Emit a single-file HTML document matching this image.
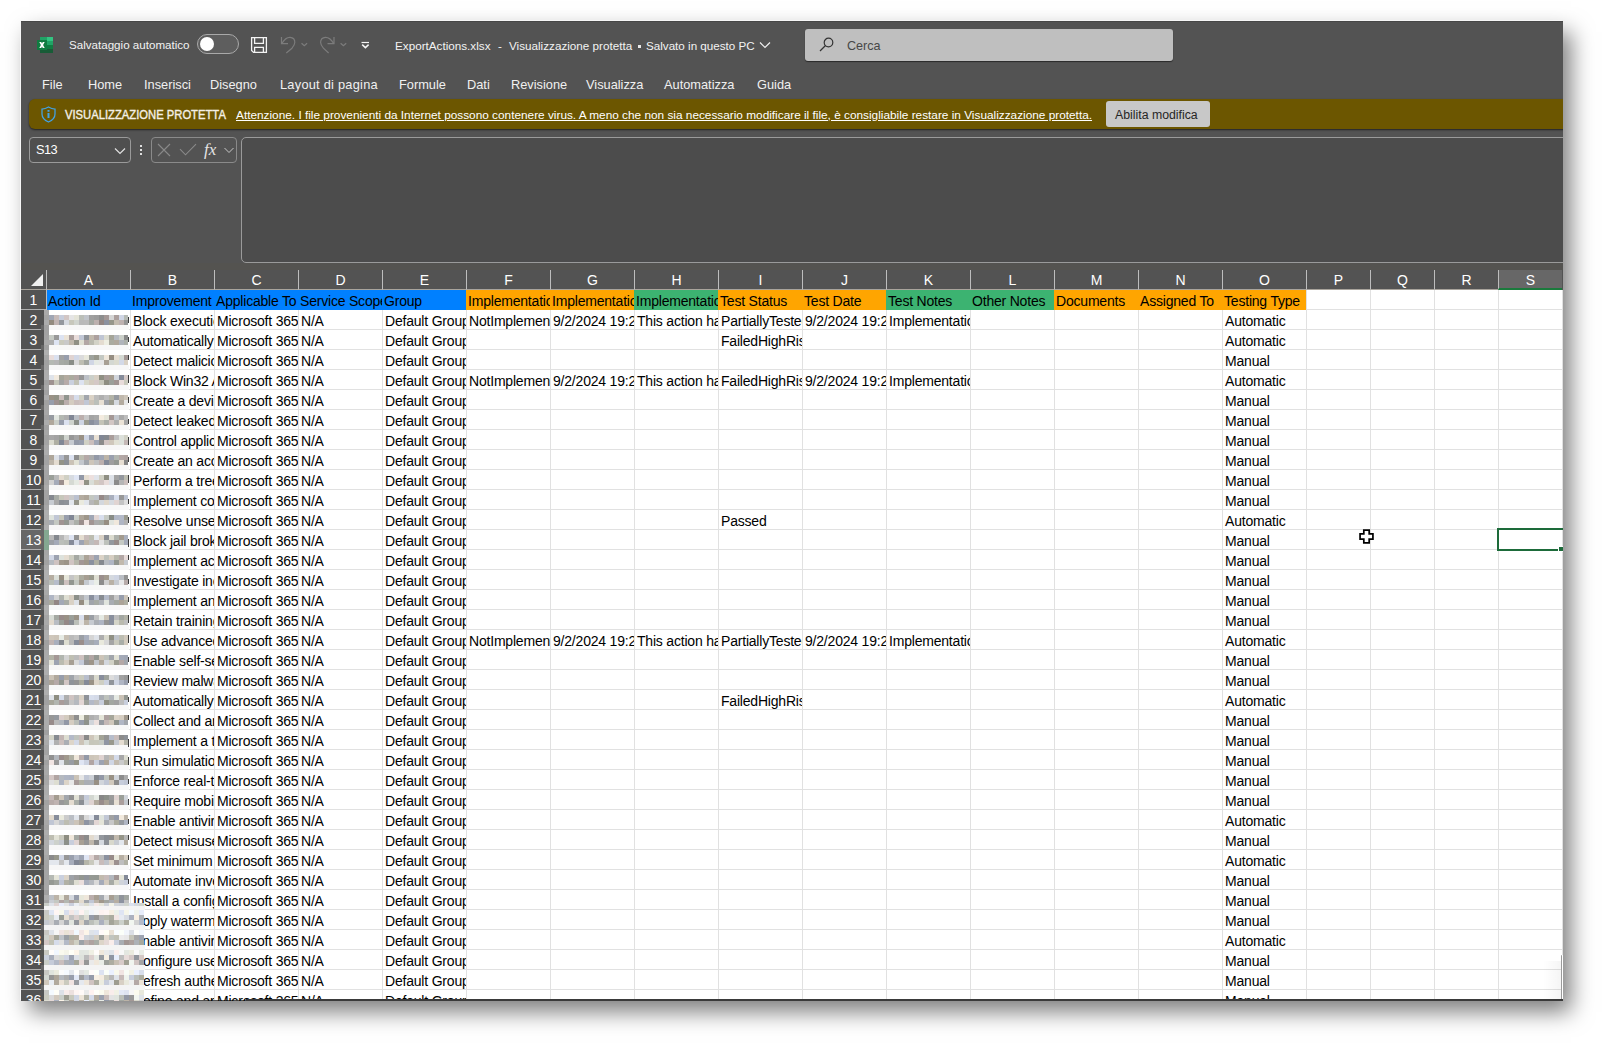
<!DOCTYPE html>
<html><head><meta charset="utf-8">
<style>
*{margin:0;padding:0;box-sizing:border-box}
html,body{width:1605px;height:1043px;background:#fff;overflow:hidden;font-family:"Liberation Sans", sans-serif}
#win{position:absolute;left:21px;top:21px;width:1542px;height:980px;background:#535353;overflow:hidden;box-shadow:-1px -1px 0 0 #f6f6f6, 8px 11px 21px rgba(0,0,0,.5)}
.abs{position:absolute}
.t{position:absolute;white-space:nowrap;color:#f2f2f2;line-height:1}
.menu span{position:absolute;top:58px;font-size:12.8px;color:#f0f0f0;white-space:nowrap;line-height:1}
#yb{position:absolute;left:8px;top:78px;width:1540px;height:30px;background:#6c5600;border-radius:6px 0 0 6px;box-shadow:0 1px 2px rgba(0,0,0,.6)}
#grid{position:absolute;left:26px;top:269px;width:1516px;height:710px;background-color:#fff;
 background-image:repeating-linear-gradient(to bottom, transparent 0, transparent 19px, #e1e1e1 19px, #e1e1e1 20px);}
.vl{position:absolute;top:269px;width:1px;height:710px;background:#e1e1e1}
.row{position:absolute;left:0;width:1542px;height:20px}
.c{position:absolute;top:0;height:19px;overflow:hidden;white-space:nowrap;font-size:14px;color:#000;line-height:23px;padding-left:2px;letter-spacing:-0.2px}
.rh{position:absolute;left:0;width:25px;height:20px;background:#535353;color:#fff;font-size:14px;text-align:center;line-height:21px;border-bottom:1px solid #b0b0b0}
.rh.sel{background:#676767}
.ch{position:absolute;top:249px;height:20px;color:#fff;font-size:14px;text-align:center;line-height:21px;border-left:1px solid #bdbdbd;border-bottom:1px solid #a9a49c;background:#535353}
.ch.sel{background:#676767;border-bottom:2px solid #1a7a3c}
#mos i{position:absolute;display:block}
</style></head><body>
<div id="win">
 <!-- title bar -->
 <svg class="abs" style="left:16px;top:16px" width="17" height="17" viewBox="0 0 17 17">
  <rect x="3" y="0" width="13" height="16" fill="#21a366"/>
  <rect x="10" y="0" width="6" height="4" fill="#33c481"/>
  <rect x="10" y="4" width="6" height="4" fill="#21a366"/>
  <rect x="3" y="8" width="13" height="4" fill="#107c41"/>
  <rect x="3" y="12" width="13" height="4" fill="#185c37"/>
  <rect x="0" y="3" width="10" height="10" fill="#107c41"/>
  <path d="M2.3 5 L4.2 5 L5 6.6 L5.8 5 L7.7 5 L6.1 8 L7.7 11 L5.8 11 L5 9.4 L4.2 11 L2.3 11 L3.9 8 Z" fill="#fff"/>
 </svg>
 <div class="t" style="left:48px;top:18px;font-size:11.6px">Salvataggio automatico</div>
 <div class="abs" style="left:176px;top:13px;width:42px;height:20px;border:1px solid #a9a9a9;border-radius:10px;background:#5e5e5e"></div>
 <div class="abs" style="left:179px;top:16px;width:14px;height:14px;border-radius:7px;background:#fff"></div>
 <svg class="abs" style="left:224px;top:11px" width="130" height="26" viewBox="245 32 130 26" fill="none" stroke-width="1.3">
  <g stroke="#f4f4f4"><path d="M251.6 37.6 H266.4 V52.4 H253.6 L251.6 50.4 Z"/><path d="M254.6 37.6 V43.4 H263.4 V37.6"/><path d="M254.6 52.4 V47.4 H263.4 V52.4"/>
  <path d="M361.5 42.5 H369" stroke-width="1.2"/><path d="M362.2 44.6 L365.4 47.6 L368.6 44.6" stroke-width="1.5"/></g>
  <g stroke="#7c7c7c" stroke-width="1.2"><path d="M281.5 37 V43.6 H288"/><path d="M282 43.2 Q 285.5 37.2 290 37.3 Q 295 37.6 294.8 42.5 Q 294.6 45.2 292 48.2 L 286.3 53"/>
  <path d="M301.5 43.2 L304.3 45.8 L307.1 43.2"/>
  <path d="M334 37 V43.6 H327.5"/><path d="M333.5 43.2 Q 330 37.2 325.5 37.3 Q 320.6 37.6 320.6 42.5 Q 320.8 45.2 323.4 48.2 L 328.6 53"/>
  <path d="M340.6 43.2 L343.4 45.8 L346.2 43.2"/></g>
 </svg>
 <div class="t" style="left:374px;top:19px;font-size:11.7px;color:#f2f2f2">ExportActions.xlsx</div>
 <div class="t" style="left:477px;top:19px;font-size:11.7px;color:#f2f2f2">-</div>
 <div class="t" style="left:488px;top:19px;font-size:11.7px;color:#f2f2f2">Visualizzazione protetta</div>
 <div class="abs" style="left:617px;top:24px;width:3px;height:3px;background:#e8e8e8"></div>
 <div class="t" style="left:625px;top:19px;font-size:11.65px;color:#f2f2f2">Salvato in questo PC</div>
 <svg class="abs" style="left:738px;top:19px" width="12" height="10" viewBox="0 0 12 10" fill="none" stroke="#f0f0f0" stroke-width="1.2"><path d="M1 2.5 L6 7.5 L11 2.5"/></svg>
 <div class="abs" style="left:784px;top:8px;width:368px;height:32px;background:#bfbfbf;border-radius:3px;box-shadow:0 1px 1px rgba(0,0,0,.5)"></div>
 <svg class="abs" style="left:797px;top:16px" width="16" height="16" viewBox="0 0 16 16" fill="none" stroke="#333" stroke-width="1.2"><circle cx="10.5" cy="5.5" r="4.3"/><path d="M7.5 8.5 L2 14"/></svg>
 <div class="t" style="left:826px;top:19px;font-size:12.6px;color:#474747">Cerca</div>
 <!-- menu -->
 <div class="menu">
  <span style="left:21px">File</span><span style="left:67px">Home</span><span style="left:123px">Inserisci</span><span style="left:189px">Disegno</span><span style="left:259px;letter-spacing:0.25px">Layout di pagina</span><span style="left:378px">Formule</span><span style="left:446px">Dati</span><span style="left:490px">Revisione</span><span style="left:565px">Visualizza</span><span style="left:643px">Automatizza</span><span style="left:736px">Guida</span>
 </div>
 <!-- yellow bar -->
 <div id="yb"></div>
 <svg class="abs" style="left:20px;top:85px" width="15" height="17" viewBox="0 0 15 17" fill="none" stroke="#42a3e6" stroke-width="1.25">
  <path d="M7.5 1 C5 2.5 3 3 1 3 V8 C1 12 4 14.5 7.5 16 C11 14.5 14 12 14 8 V3 C12 3 10 2.5 7.5 1 Z"/>
  <rect x="6.5" y="7" width="2" height="5" fill="#42a3e6" stroke="none"/><rect x="6.5" y="4" width="2" height="1.8" fill="#42a3e6" stroke="none"/>
 </svg>
 <div class="t" style="left:44px;top:88px;font-size:12.2px;-webkit-text-stroke:0.35px #f4f0e6;color:#f4f0e6;transform:scaleX(0.922);transform-origin:0 0">VISUALIZZAZIONE PROTETTA</div>
 <div class="t" style="left:215px;top:89px;font-size:11.82px;color:#fff;text-decoration:underline">Attenzione. I file provenienti da Internet possono contenere virus. A meno che non sia necessario modificare il file, è consigliabile restare in Visualizzazione protetta.</div>
 <div class="abs" style="left:1085px;top:80px;width:104px;height:26px;background:#c8c8c8;border-radius:3px"></div>
 <div class="t" style="left:1094px;top:88px;font-size:12.3px;color:#262626">Abilita modifica</div>
 <!-- formula bar -->
 <div class="abs" style="left:8px;top:116px;width:102px;height:26px;border:1px solid #9a9a9a;border-radius:4px;background:#4f4f4f"></div>
 <div class="t" style="left:15px;top:123px;font-size:12.8px;letter-spacing:-0.6px;color:#fff">S13</div>
 <svg class="abs" style="left:92px;top:125px" width="14" height="10" viewBox="0 0 14 10" fill="none" stroke="#e0e0e0" stroke-width="1.2"><path d="M2 2.5 L7 7.5 L12 2.5"/></svg>
 <div class="abs" style="left:119px;top:124px;width:2px;height:2px;background:#e0e0e0;box-shadow:0 4px 0 #e0e0e0,0 8px 0 #e0e0e0"></div>
 <div class="abs" style="left:130px;top:116px;width:86px;height:26px;border:1px solid #8a8a8a;border-radius:4px;background:#535353"></div>
 <svg class="abs" style="left:135px;top:122px" width="80" height="16" viewBox="0 0 80 16" fill="none" stroke="#8a8a8a" stroke-width="1.1">
  <path d="M2 1 L14 13 M14 1 L2 13"/><path d="M24 6.2 L29.5 11.8 L40 1.2"/>
 </svg>
 <div class="t" style="left:183px;top:120px;font-family:'Liberation Serif',serif;font-style:italic;font-size:17px;color:#e4e4e4">fx</div>
 <svg class="abs" style="left:202px;top:125px" width="12" height="9" viewBox="0 0 12 9" fill="none" stroke="#c8c8c8" stroke-width="1"><path d="M1.5 2 L6 6.5 L10.5 2"/></svg>
 <div class="abs" style="left:220px;top:116px;width:1340px;height:126px;border:1px solid #9a9a9a;border-radius:5px;background:#4c4c4c"></div>
 <div class="abs" style="left:0;top:242px;width:1542px;height:7px;background:#545350"></div>
 <!-- grid -->
 <div id="grid"></div>
 <div class="vl" style="left:109px"></div><div class="vl" style="left:193px"></div><div class="vl" style="left:277px"></div><div class="vl" style="left:361px"></div><div class="vl" style="left:445px"></div><div class="vl" style="left:529px"></div><div class="vl" style="left:613px"></div><div class="vl" style="left:697px"></div><div class="vl" style="left:781px"></div><div class="vl" style="left:865px"></div><div class="vl" style="left:949px"></div><div class="vl" style="left:1033px"></div><div class="vl" style="left:1117px"></div><div class="vl" style="left:1201px"></div><div class="vl" style="left:1285px"></div><div class="vl" style="left:1349px"></div><div class="vl" style="left:1413px"></div><div class="vl" style="left:1477px"></div><div class="vl" style="left:1541px"></div>
 <div class="row" style="top:269px"><div class="c" style="left:26px;width:83px;background:#0080ff;left:25px;width:84px;height:20px"><span>Action Id</span></div><div class="c" style="left:110px;width:83px;background:#0080ff;left:109px;width:84px;height:20px"><span>Improvement Action</span></div><div class="c" style="left:194px;width:83px;background:#0080ff;left:193px;width:84px;height:20px"><span>Applicable To</span></div><div class="c" style="left:278px;width:83px;background:#0080ff;left:277px;width:84px;height:20px"><span>Service Scope</span></div><div class="c" style="left:362px;width:83px;background:#0080ff;left:361px;width:84px;height:20px"><span>Group</span></div><div class="c" style="left:446px;width:83px;background:#ffa500;left:445px;width:84px;height:20px"><span>Implementation Status</span></div><div class="c" style="left:530px;width:83px;background:#ffa500;left:529px;width:84px;height:20px"><span>Implementation Date</span></div><div class="c" style="left:614px;width:83px;background:#3cb371;left:613px;width:84px;height:20px"><span>Implementation Notes</span></div><div class="c" style="left:698px;width:83px;background:#ffa500;left:697px;width:84px;height:20px"><span>Test Status</span></div><div class="c" style="left:782px;width:83px;background:#ffa500;left:781px;width:84px;height:20px"><span>Test Date</span></div><div class="c" style="left:866px;width:83px;background:#3cb371;left:865px;width:84px;height:20px"><span>Test Notes</span></div><div class="c" style="left:950px;width:83px;background:#3cb371;left:949px;width:84px;height:20px"><span>Other Notes</span></div><div class="c" style="left:1034px;width:83px;background:#ffa500;left:1033px;width:84px;height:20px"><span>Documents</span></div><div class="c" style="left:1118px;width:83px;background:#ffa500;left:1117px;width:84px;height:20px"><span>Assigned To</span></div><div class="c" style="left:1202px;width:83px;background:#ffa500;left:1201px;width:84px;height:20px"><span>Testing Type</span></div></div><div class="row" style="top:289px"><div class="c" style="left:110px;width:83px"><span>Block execution of potentially obfuscated scripts</span></div><div class="c" style="left:194px;width:83px"><span>Microsoft 365 E5</span></div><div class="c" style="left:278px;width:83px"><span>N/A</span></div><div class="c" style="left:362px;width:83px"><span>Default Group</span></div><div class="c" style="left:446px;width:83px"><span>NotImplemented</span></div><div class="c" style="left:530px;width:83px"><span>9/2/2024 19:28</span></div><div class="c" style="left:614px;width:83px"><span>This action has</span></div><div class="c" style="left:698px;width:83px"><span>PartiallyTested</span></div><div class="c" style="left:782px;width:83px"><span>9/2/2024 19:28</span></div><div class="c" style="left:866px;width:83px"><span>Implementation</span></div><div class="c" style="left:1202px;width:83px"><span>Automatic</span></div></div><div class="row" style="top:309px"><div class="c" style="left:110px;width:83px"><span>Automatically apply sensitivity labels</span></div><div class="c" style="left:194px;width:83px"><span>Microsoft 365 E5</span></div><div class="c" style="left:278px;width:83px"><span>N/A</span></div><div class="c" style="left:362px;width:83px"><span>Default Group</span></div><div class="c" style="left:698px;width:83px"><span>FailedHighRisk</span></div><div class="c" style="left:1202px;width:83px"><span>Automatic</span></div></div><div class="row" style="top:329px"><div class="c" style="left:110px;width:83px"><span>Detect malicious activity</span></div><div class="c" style="left:194px;width:83px"><span>Microsoft 365 E5</span></div><div class="c" style="left:278px;width:83px"><span>N/A</span></div><div class="c" style="left:362px;width:83px"><span>Default Group</span></div><div class="c" style="left:1202px;width:83px"><span>Manual</span></div></div><div class="row" style="top:349px"><div class="c" style="left:110px;width:83px"><span>Block Win32 API calls from Office macros</span></div><div class="c" style="left:194px;width:83px"><span>Microsoft 365 E5</span></div><div class="c" style="left:278px;width:83px"><span>N/A</span></div><div class="c" style="left:362px;width:83px"><span>Default Group</span></div><div class="c" style="left:446px;width:83px"><span>NotImplemented</span></div><div class="c" style="left:530px;width:83px"><span>9/2/2024 19:28</span></div><div class="c" style="left:614px;width:83px"><span>This action has</span></div><div class="c" style="left:698px;width:83px"><span>FailedHighRisk</span></div><div class="c" style="left:782px;width:83px"><span>9/2/2024 19:28</span></div><div class="c" style="left:866px;width:83px"><span>Implementation</span></div><div class="c" style="left:1202px;width:83px"><span>Automatic</span></div></div><div class="row" style="top:369px"><div class="c" style="left:110px;width:83px"><span>Create a device compliance policy</span></div><div class="c" style="left:194px;width:83px"><span>Microsoft 365 E5</span></div><div class="c" style="left:278px;width:83px"><span>N/A</span></div><div class="c" style="left:362px;width:83px"><span>Default Group</span></div><div class="c" style="left:1202px;width:83px"><span>Manual</span></div></div><div class="row" style="top:389px"><div class="c" style="left:110px;width:83px"><span>Detect leaked credentials</span></div><div class="c" style="left:194px;width:83px"><span>Microsoft 365 E5</span></div><div class="c" style="left:278px;width:83px"><span>N/A</span></div><div class="c" style="left:362px;width:83px"><span>Default Group</span></div><div class="c" style="left:1202px;width:83px"><span>Manual</span></div></div><div class="row" style="top:409px"><div class="c" style="left:110px;width:83px"><span>Control application permissions</span></div><div class="c" style="left:194px;width:83px"><span>Microsoft 365 E5</span></div><div class="c" style="left:278px;width:83px"><span>N/A</span></div><div class="c" style="left:362px;width:83px"><span>Default Group</span></div><div class="c" style="left:1202px;width:83px"><span>Manual</span></div></div><div class="row" style="top:429px"><div class="c" style="left:110px;width:83px"><span>Create an account</span></div><div class="c" style="left:194px;width:83px"><span>Microsoft 365 E5</span></div><div class="c" style="left:278px;width:83px"><span>N/A</span></div><div class="c" style="left:362px;width:83px"><span>Default Group</span></div><div class="c" style="left:1202px;width:83px"><span>Manual</span></div></div><div class="row" style="top:449px"><div class="c" style="left:110px;width:83px"><span>Perform a tree</span></div><div class="c" style="left:194px;width:83px"><span>Microsoft 365 E5</span></div><div class="c" style="left:278px;width:83px"><span>N/A</span></div><div class="c" style="left:362px;width:83px"><span>Default Group</span></div><div class="c" style="left:1202px;width:83px"><span>Manual</span></div></div><div class="row" style="top:469px"><div class="c" style="left:110px;width:83px"><span>Implement controls</span></div><div class="c" style="left:194px;width:83px"><span>Microsoft 365 E5</span></div><div class="c" style="left:278px;width:83px"><span>N/A</span></div><div class="c" style="left:362px;width:83px"><span>Default Group</span></div><div class="c" style="left:1202px;width:83px"><span>Manual</span></div></div><div class="row" style="top:489px"><div class="c" style="left:110px;width:83px"><span>Resolve unsecure</span></div><div class="c" style="left:194px;width:83px"><span>Microsoft 365 E5</span></div><div class="c" style="left:278px;width:83px"><span>N/A</span></div><div class="c" style="left:362px;width:83px"><span>Default Group</span></div><div class="c" style="left:698px;width:83px"><span>Passed</span></div><div class="c" style="left:1202px;width:83px"><span>Automatic</span></div></div><div class="row" style="top:509px"><div class="c" style="left:110px;width:83px"><span>Block jail broken devices</span></div><div class="c" style="left:194px;width:83px"><span>Microsoft 365 E5</span></div><div class="c" style="left:278px;width:83px"><span>N/A</span></div><div class="c" style="left:362px;width:83px"><span>Default Group</span></div><div class="c" style="left:1202px;width:83px"><span>Manual</span></div></div><div class="row" style="top:529px"><div class="c" style="left:110px;width:83px"><span>Implement access</span></div><div class="c" style="left:194px;width:83px"><span>Microsoft 365 E5</span></div><div class="c" style="left:278px;width:83px"><span>N/A</span></div><div class="c" style="left:362px;width:83px"><span>Default Group</span></div><div class="c" style="left:1202px;width:83px"><span>Manual</span></div></div><div class="row" style="top:549px"><div class="c" style="left:110px;width:83px"><span>Investigate incidents</span></div><div class="c" style="left:194px;width:83px"><span>Microsoft 365 E5</span></div><div class="c" style="left:278px;width:83px"><span>N/A</span></div><div class="c" style="left:362px;width:83px"><span>Default Group</span></div><div class="c" style="left:1202px;width:83px"><span>Manual</span></div></div><div class="row" style="top:569px"><div class="c" style="left:110px;width:83px"><span>Implement an</span></div><div class="c" style="left:194px;width:83px"><span>Microsoft 365 E5</span></div><div class="c" style="left:278px;width:83px"><span>N/A</span></div><div class="c" style="left:362px;width:83px"><span>Default Group</span></div><div class="c" style="left:1202px;width:83px"><span>Manual</span></div></div><div class="row" style="top:589px"><div class="c" style="left:110px;width:83px"><span>Retain training records</span></div><div class="c" style="left:194px;width:83px"><span>Microsoft 365 E5</span></div><div class="c" style="left:278px;width:83px"><span>N/A</span></div><div class="c" style="left:362px;width:83px"><span>Default Group</span></div><div class="c" style="left:1202px;width:83px"><span>Manual</span></div></div><div class="row" style="top:609px"><div class="c" style="left:110px;width:83px"><span>Use advanced threat</span></div><div class="c" style="left:194px;width:83px"><span>Microsoft 365 E5</span></div><div class="c" style="left:278px;width:83px"><span>N/A</span></div><div class="c" style="left:362px;width:83px"><span>Default Group</span></div><div class="c" style="left:446px;width:83px"><span>NotImplemented</span></div><div class="c" style="left:530px;width:83px"><span>9/2/2024 19:28</span></div><div class="c" style="left:614px;width:83px"><span>This action has</span></div><div class="c" style="left:698px;width:83px"><span>PartiallyTested</span></div><div class="c" style="left:782px;width:83px"><span>9/2/2024 19:28</span></div><div class="c" style="left:866px;width:83px"><span>Implementation</span></div><div class="c" style="left:1202px;width:83px"><span>Automatic</span></div></div><div class="row" style="top:629px"><div class="c" style="left:110px;width:83px"><span>Enable self-service</span></div><div class="c" style="left:194px;width:83px"><span>Microsoft 365 E5</span></div><div class="c" style="left:278px;width:83px"><span>N/A</span></div><div class="c" style="left:362px;width:83px"><span>Default Group</span></div><div class="c" style="left:1202px;width:83px"><span>Manual</span></div></div><div class="row" style="top:649px"><div class="c" style="left:110px;width:83px"><span>Review malware</span></div><div class="c" style="left:194px;width:83px"><span>Microsoft 365 E5</span></div><div class="c" style="left:278px;width:83px"><span>N/A</span></div><div class="c" style="left:362px;width:83px"><span>Default Group</span></div><div class="c" style="left:1202px;width:83px"><span>Manual</span></div></div><div class="row" style="top:669px"><div class="c" style="left:110px;width:83px"><span>Automatically apply</span></div><div class="c" style="left:194px;width:83px"><span>Microsoft 365 E5</span></div><div class="c" style="left:278px;width:83px"><span>N/A</span></div><div class="c" style="left:362px;width:83px"><span>Default Group</span></div><div class="c" style="left:698px;width:83px"><span>FailedHighRisk</span></div><div class="c" style="left:1202px;width:83px"><span>Automatic</span></div></div><div class="row" style="top:689px"><div class="c" style="left:110px;width:83px"><span>Collect and analyze</span></div><div class="c" style="left:194px;width:83px"><span>Microsoft 365 E5</span></div><div class="c" style="left:278px;width:83px"><span>N/A</span></div><div class="c" style="left:362px;width:83px"><span>Default Group</span></div><div class="c" style="left:1202px;width:83px"><span>Manual</span></div></div><div class="row" style="top:709px"><div class="c" style="left:110px;width:83px"><span>Implement a technical</span></div><div class="c" style="left:194px;width:83px"><span>Microsoft 365 E5</span></div><div class="c" style="left:278px;width:83px"><span>N/A</span></div><div class="c" style="left:362px;width:83px"><span>Default Group</span></div><div class="c" style="left:1202px;width:83px"><span>Manual</span></div></div><div class="row" style="top:729px"><div class="c" style="left:110px;width:83px"><span>Run simulations</span></div><div class="c" style="left:194px;width:83px"><span>Microsoft 365 E5</span></div><div class="c" style="left:278px;width:83px"><span>N/A</span></div><div class="c" style="left:362px;width:83px"><span>Default Group</span></div><div class="c" style="left:1202px;width:83px"><span>Manual</span></div></div><div class="row" style="top:749px"><div class="c" style="left:110px;width:83px"><span>Enforce real-time</span></div><div class="c" style="left:194px;width:83px"><span>Microsoft 365 E5</span></div><div class="c" style="left:278px;width:83px"><span>N/A</span></div><div class="c" style="left:362px;width:83px"><span>Default Group</span></div><div class="c" style="left:1202px;width:83px"><span>Manual</span></div></div><div class="row" style="top:769px"><div class="c" style="left:110px;width:83px"><span>Require mobile</span></div><div class="c" style="left:194px;width:83px"><span>Microsoft 365 E5</span></div><div class="c" style="left:278px;width:83px"><span>N/A</span></div><div class="c" style="left:362px;width:83px"><span>Default Group</span></div><div class="c" style="left:1202px;width:83px"><span>Manual</span></div></div><div class="row" style="top:789px"><div class="c" style="left:110px;width:83px"><span>Enable antivirus</span></div><div class="c" style="left:194px;width:83px"><span>Microsoft 365 E5</span></div><div class="c" style="left:278px;width:83px"><span>N/A</span></div><div class="c" style="left:362px;width:83px"><span>Default Group</span></div><div class="c" style="left:1202px;width:83px"><span>Automatic</span></div></div><div class="row" style="top:809px"><div class="c" style="left:110px;width:83px"><span>Detect misuse</span></div><div class="c" style="left:194px;width:83px"><span>Microsoft 365 E5</span></div><div class="c" style="left:278px;width:83px"><span>N/A</span></div><div class="c" style="left:362px;width:83px"><span>Default Group</span></div><div class="c" style="left:1202px;width:83px"><span>Manual</span></div></div><div class="row" style="top:829px"><div class="c" style="left:110px;width:83px"><span>Set minimum password</span></div><div class="c" style="left:194px;width:83px"><span>Microsoft 365 E5</span></div><div class="c" style="left:278px;width:83px"><span>N/A</span></div><div class="c" style="left:362px;width:83px"><span>Default Group</span></div><div class="c" style="left:1202px;width:83px"><span>Automatic</span></div></div><div class="row" style="top:849px"><div class="c" style="left:110px;width:83px"><span>Automate investigation</span></div><div class="c" style="left:194px;width:83px"><span>Microsoft 365 E5</span></div><div class="c" style="left:278px;width:83px"><span>N/A</span></div><div class="c" style="left:362px;width:83px"><span>Default Group</span></div><div class="c" style="left:1202px;width:83px"><span>Manual</span></div></div><div class="row" style="top:869px"><div class="c" style="left:110px;width:83px"><span>Install a configuration</span></div><div class="c" style="left:194px;width:83px"><span>Microsoft 365 E5</span></div><div class="c" style="left:278px;width:83px"><span>N/A</span></div><div class="c" style="left:362px;width:83px"><span>Default Group</span></div><div class="c" style="left:1202px;width:83px"><span>Manual</span></div></div><div class="row" style="top:889px"><div class="c" style="left:110px;width:83px"><span>Apply watermarks</span></div><div class="c" style="left:194px;width:83px"><span>Microsoft 365 E5</span></div><div class="c" style="left:278px;width:83px"><span>N/A</span></div><div class="c" style="left:362px;width:83px"><span>Default Group</span></div><div class="c" style="left:1202px;width:83px"><span>Manual</span></div></div><div class="row" style="top:909px"><div class="c" style="left:110px;width:83px"><span>Enable antivirus</span></div><div class="c" style="left:194px;width:83px"><span>Microsoft 365 E5</span></div><div class="c" style="left:278px;width:83px"><span>N/A</span></div><div class="c" style="left:362px;width:83px"><span>Default Group</span></div><div class="c" style="left:1202px;width:83px"><span>Automatic</span></div></div><div class="row" style="top:929px"><div class="c" style="left:110px;width:83px"><span>Configure user</span></div><div class="c" style="left:194px;width:83px"><span>Microsoft 365 E5</span></div><div class="c" style="left:278px;width:83px"><span>N/A</span></div><div class="c" style="left:362px;width:83px"><span>Default Group</span></div><div class="c" style="left:1202px;width:83px"><span>Manual</span></div></div><div class="row" style="top:949px"><div class="c" style="left:110px;width:83px"><span>Refresh authentication</span></div><div class="c" style="left:194px;width:83px"><span>Microsoft 365 E5</span></div><div class="c" style="left:278px;width:83px"><span>N/A</span></div><div class="c" style="left:362px;width:83px"><span>Default Group</span></div><div class="c" style="left:1202px;width:83px"><span>Manual</span></div></div><div class="row" style="top:969px"><div class="c" style="left:110px;width:83px"><span>Define and apply</span></div><div class="c" style="left:194px;width:83px"><span>Microsoft 365 E5</span></div><div class="c" style="left:278px;width:83px"><span>N/A</span></div><div class="c" style="left:362px;width:83px"><span>Default Group</span></div><div class="c" style="left:1202px;width:83px"><span>Manual</span></div></div>
 <div class="abs" style="left:0;top:249px;width:25px;height:20px;background:#535353;border-bottom:1px solid #a9a49c"></div>
 <svg class="abs" style="left:10px;top:253px" width="12" height="12" viewBox="0 0 12 12"><path d="M12 0 V12 H0 Z" fill="#f0f0f0"/></svg>
 <div class="ch" style="left:25px;width:84px">A</div><div class="ch" style="left:109px;width:84px">B</div><div class="ch" style="left:193px;width:84px">C</div><div class="ch" style="left:277px;width:84px">D</div><div class="ch" style="left:361px;width:84px">E</div><div class="ch" style="left:445px;width:84px">F</div><div class="ch" style="left:529px;width:84px">G</div><div class="ch" style="left:613px;width:84px">H</div><div class="ch" style="left:697px;width:84px">I</div><div class="ch" style="left:781px;width:84px">J</div><div class="ch" style="left:865px;width:84px">K</div><div class="ch" style="left:949px;width:84px">L</div><div class="ch" style="left:1033px;width:84px">M</div><div class="ch" style="left:1117px;width:84px">N</div><div class="ch" style="left:1201px;width:84px">O</div><div class="ch" style="left:1285px;width:64px">P</div><div class="ch" style="left:1349px;width:64px">Q</div><div class="ch" style="left:1413px;width:64px">R</div><div class="ch sel" style="left:1477px;width:64px">S</div>
 <div class="rh" style="top:269px">1</div><div class="rh" style="top:289px">2</div><div class="rh" style="top:309px">3</div><div class="rh" style="top:329px">4</div><div class="rh" style="top:349px">5</div><div class="rh" style="top:369px">6</div><div class="rh" style="top:389px">7</div><div class="rh" style="top:409px">8</div><div class="rh" style="top:429px">9</div><div class="rh" style="top:449px">10</div><div class="rh" style="top:469px">11</div><div class="rh" style="top:489px">12</div><div class="rh sel" style="top:509px">13</div><div class="rh" style="top:529px">14</div><div class="rh" style="top:549px">15</div><div class="rh" style="top:569px">16</div><div class="rh" style="top:589px">17</div><div class="rh" style="top:609px">18</div><div class="rh" style="top:629px">19</div><div class="rh" style="top:649px">20</div><div class="rh" style="top:669px">21</div><div class="rh" style="top:689px">22</div><div class="rh" style="top:709px">23</div><div class="rh" style="top:729px">24</div><div class="rh" style="top:749px">25</div><div class="rh" style="top:769px">26</div><div class="rh" style="top:789px">27</div><div class="rh" style="top:809px">28</div><div class="rh" style="top:829px">29</div><div class="rh" style="top:849px">30</div><div class="rh" style="top:869px">31</div><div class="rh" style="top:889px">32</div><div class="rh" style="top:909px">33</div><div class="rh" style="top:929px">34</div><div class="rh" style="top:949px">35</div><div class="rh" style="top:969px">36</div>
 <div class="abs" style="left:25px;top:249px;width:1px;height:730px;background:#bdbdbd"></div>
 <div id="mos"><i style="left:23px;top:289px;width:5px;height:5px;background:#aaaaaa"></i><i style="left:23px;top:294px;width:5px;height:5px;background:#a4a4a4"></i><i style="left:23px;top:299px;width:5px;height:5px;background:#acacac"></i><i style="left:23px;top:304px;width:5px;height:5px;background:#a1a1a1"></i><i style="left:23px;top:309px;width:5px;height:5px;background:#a2a2a2"></i><i style="left:23px;top:314px;width:5px;height:5px;background:#a3a3a3"></i><i style="left:23px;top:319px;width:5px;height:5px;background:#ababab"></i><i style="left:23px;top:324px;width:5px;height:5px;background:#a1a1a1"></i><i style="left:23px;top:329px;width:5px;height:5px;background:#b0b0b0"></i><i style="left:23px;top:334px;width:5px;height:5px;background:#a6a6a6"></i><i style="left:23px;top:339px;width:5px;height:5px;background:#a1a1a1"></i><i style="left:23px;top:344px;width:5px;height:5px;background:#a2a2a2"></i><i style="left:23px;top:349px;width:5px;height:5px;background:#adadad"></i><i style="left:23px;top:354px;width:5px;height:5px;background:#adadad"></i><i style="left:23px;top:359px;width:5px;height:5px;background:#a2a2a2"></i><i style="left:23px;top:364px;width:5px;height:5px;background:#a7a7a7"></i><i style="left:23px;top:369px;width:5px;height:5px;background:#a2a2a2"></i><i style="left:23px;top:374px;width:5px;height:5px;background:#adadad"></i><i style="left:23px;top:379px;width:5px;height:5px;background:#a1a1a1"></i><i style="left:23px;top:384px;width:5px;height:5px;background:#a3a3a3"></i><i style="left:23px;top:389px;width:5px;height:5px;background:#a7a7a7"></i><i style="left:23px;top:394px;width:5px;height:5px;background:#a1a1a1"></i><i style="left:23px;top:399px;width:5px;height:5px;background:#acacac"></i><i style="left:23px;top:404px;width:5px;height:5px;background:#a1a1a1"></i><i style="left:23px;top:409px;width:5px;height:5px;background:#a7a7a7"></i><i style="left:23px;top:414px;width:5px;height:5px;background:#a1a1a1"></i><i style="left:23px;top:419px;width:5px;height:5px;background:#a4a4a4"></i><i style="left:23px;top:424px;width:5px;height:5px;background:#a9a9a9"></i><i style="left:23px;top:429px;width:5px;height:5px;background:#adadad"></i><i style="left:23px;top:434px;width:5px;height:5px;background:#a4a4a4"></i><i style="left:23px;top:439px;width:5px;height:5px;background:#a3a3a3"></i><i style="left:23px;top:444px;width:5px;height:5px;background:#a9a9a9"></i><i style="left:23px;top:449px;width:5px;height:5px;background:#a5a5a5"></i><i style="left:23px;top:454px;width:5px;height:5px;background:#a3a3a3"></i><i style="left:23px;top:459px;width:5px;height:5px;background:#a6a6a6"></i><i style="left:23px;top:464px;width:5px;height:5px;background:#ababab"></i><i style="left:23px;top:469px;width:5px;height:5px;background:#a3a3a3"></i><i style="left:23px;top:474px;width:5px;height:5px;background:#a2a2a2"></i><i style="left:23px;top:479px;width:5px;height:5px;background:#a1a1a1"></i><i style="left:23px;top:484px;width:5px;height:5px;background:#a6a6a6"></i><i style="left:23px;top:489px;width:5px;height:5px;background:#afafaf"></i><i style="left:23px;top:494px;width:5px;height:5px;background:#adadad"></i><i style="left:23px;top:499px;width:5px;height:5px;background:#aaaaaa"></i><i style="left:23px;top:504px;width:5px;height:5px;background:#aeaeae"></i><i style="left:23px;top:509px;width:5px;height:5px;background:#84a891"></i><i style="left:23px;top:514px;width:5px;height:5px;background:#84a891"></i><i style="left:23px;top:519px;width:5px;height:5px;background:#84a891"></i><i style="left:23px;top:524px;width:5px;height:5px;background:#84a891"></i><i style="left:23px;top:529px;width:5px;height:5px;background:#a5a5a5"></i><i style="left:23px;top:534px;width:5px;height:5px;background:#a7a7a7"></i><i style="left:23px;top:539px;width:5px;height:5px;background:#a2a2a2"></i><i style="left:23px;top:544px;width:5px;height:5px;background:#a9a9a9"></i><i style="left:23px;top:549px;width:5px;height:5px;background:#b0b0b0"></i><i style="left:23px;top:554px;width:5px;height:5px;background:#afafaf"></i><i style="left:23px;top:559px;width:5px;height:5px;background:#aaaaaa"></i><i style="left:23px;top:564px;width:5px;height:5px;background:#aeaeae"></i><i style="left:23px;top:569px;width:5px;height:5px;background:#a9a9a9"></i><i style="left:23px;top:574px;width:5px;height:5px;background:#a2a2a2"></i><i style="left:23px;top:579px;width:5px;height:5px;background:#a3a3a3"></i><i style="left:23px;top:584px;width:5px;height:5px;background:#b0b0b0"></i><i style="left:23px;top:589px;width:5px;height:5px;background:#adadad"></i><i style="left:23px;top:594px;width:5px;height:5px;background:#a5a5a5"></i><i style="left:23px;top:599px;width:5px;height:5px;background:#aaaaaa"></i><i style="left:23px;top:604px;width:5px;height:5px;background:#a4a4a4"></i><i style="left:23px;top:609px;width:5px;height:5px;background:#afafaf"></i><i style="left:23px;top:614px;width:5px;height:5px;background:#adadad"></i><i style="left:23px;top:619px;width:5px;height:5px;background:#a1a1a1"></i><i style="left:23px;top:624px;width:5px;height:5px;background:#a2a2a2"></i><i style="left:23px;top:629px;width:5px;height:5px;background:#aaaaaa"></i><i style="left:23px;top:634px;width:5px;height:5px;background:#aaaaaa"></i><i style="left:23px;top:639px;width:5px;height:5px;background:#ababab"></i><i style="left:23px;top:644px;width:5px;height:5px;background:#afafaf"></i><i style="left:23px;top:649px;width:5px;height:5px;background:#aeaeae"></i><i style="left:23px;top:654px;width:5px;height:5px;background:#a2a2a2"></i><i style="left:23px;top:659px;width:5px;height:5px;background:#a2a2a2"></i><i style="left:23px;top:664px;width:5px;height:5px;background:#a8a8a8"></i><i style="left:23px;top:669px;width:5px;height:5px;background:#afafaf"></i><i style="left:23px;top:674px;width:5px;height:5px;background:#a2a2a2"></i><i style="left:23px;top:679px;width:5px;height:5px;background:#a1a1a1"></i><i style="left:23px;top:684px;width:5px;height:5px;background:#a9a9a9"></i><i style="left:23px;top:689px;width:5px;height:5px;background:#aeaeae"></i><i style="left:23px;top:694px;width:5px;height:5px;background:#a9a9a9"></i><i style="left:23px;top:699px;width:5px;height:5px;background:#acacac"></i><i style="left:23px;top:704px;width:5px;height:5px;background:#ababab"></i><i style="left:23px;top:709px;width:5px;height:5px;background:#a0a0a0"></i><i style="left:23px;top:714px;width:5px;height:5px;background:#aeaeae"></i><i style="left:23px;top:719px;width:5px;height:5px;background:#ababab"></i><i style="left:23px;top:724px;width:5px;height:5px;background:#a5a5a5"></i><i style="left:23px;top:729px;width:5px;height:5px;background:#a3a3a3"></i><i style="left:23px;top:734px;width:5px;height:5px;background:#afafaf"></i><i style="left:23px;top:739px;width:5px;height:5px;background:#a1a1a1"></i><i style="left:23px;top:744px;width:5px;height:5px;background:#a6a6a6"></i><i style="left:23px;top:749px;width:5px;height:5px;background:#a9a9a9"></i><i style="left:23px;top:754px;width:5px;height:5px;background:#a4a4a4"></i><i style="left:23px;top:759px;width:5px;height:5px;background:#a7a7a7"></i><i style="left:23px;top:764px;width:5px;height:5px;background:#acacac"></i><i style="left:23px;top:769px;width:5px;height:5px;background:#acacac"></i><i style="left:23px;top:774px;width:5px;height:5px;background:#afafaf"></i><i style="left:23px;top:779px;width:5px;height:5px;background:#a2a2a2"></i><i style="left:23px;top:784px;width:5px;height:5px;background:#a5a5a5"></i><i style="left:23px;top:789px;width:5px;height:5px;background:#aeaeae"></i><i style="left:23px;top:794px;width:5px;height:5px;background:#acacac"></i><i style="left:23px;top:799px;width:5px;height:5px;background:#a8a8a8"></i><i style="left:23px;top:804px;width:5px;height:5px;background:#a4a4a4"></i><i style="left:23px;top:809px;width:5px;height:5px;background:#adadad"></i><i style="left:23px;top:814px;width:5px;height:5px;background:#a8a8a8"></i><i style="left:23px;top:819px;width:5px;height:5px;background:#adadad"></i><i style="left:23px;top:824px;width:5px;height:5px;background:#ababab"></i><i style="left:23px;top:829px;width:5px;height:5px;background:#acacac"></i><i style="left:23px;top:834px;width:5px;height:5px;background:#a7a7a7"></i><i style="left:23px;top:839px;width:5px;height:5px;background:#a4a4a4"></i><i style="left:23px;top:844px;width:5px;height:5px;background:#a2a2a2"></i><i style="left:23px;top:849px;width:5px;height:5px;background:#a5a5a5"></i><i style="left:23px;top:854px;width:5px;height:5px;background:#a4a4a4"></i><i style="left:23px;top:859px;width:5px;height:5px;background:#a7a7a7"></i><i style="left:23px;top:864px;width:5px;height:5px;background:#a7a7a7"></i><i style="left:23px;top:869px;width:5px;height:5px;background:#a0a0a0"></i><i style="left:23px;top:874px;width:5px;height:5px;background:#afafaf"></i><i style="left:23px;top:879px;width:5px;height:5px;background:#a5a5a5"></i><i style="left:28px;top:294px;width:5px;height:5px;background:#a0a6b4"></i><i style="left:28px;top:299px;width:5px;height:5px;background:#938b7f"></i><i style="left:33px;top:294px;width:5px;height:5px;background:#c6bab8"></i><i style="left:33px;top:299px;width:5px;height:5px;background:#c0b4b2"></i><i style="left:38px;top:294px;width:5px;height:5px;background:#c7cddb"></i><i style="left:38px;top:299px;width:5px;height:5px;background:#93979d"></i><i style="left:43px;top:294px;width:5px;height:5px;background:#d2c6c4"></i><i style="left:43px;top:299px;width:5px;height:5px;background:#d6dae0"></i><i style="left:48px;top:294px;width:5px;height:5px;background:#e5e5e5"></i><i style="left:48px;top:299px;width:5px;height:5px;background:#c7c7bb"></i><i style="left:53px;top:294px;width:5px;height:5px;background:#e4e4d8"></i><i style="left:53px;top:299px;width:5px;height:5px;background:#d0d4ce"></i><i style="left:58px;top:294px;width:5px;height:5px;background:#bbbfb9"></i><i style="left:58px;top:299px;width:5px;height:5px;background:#b9b9b9"></i><i style="left:63px;top:294px;width:5px;height:5px;background:#c0c4ca"></i><i style="left:63px;top:299px;width:5px;height:5px;background:#bababa"></i><i style="left:68px;top:294px;width:5px;height:5px;background:#9f9f9f"></i><i style="left:68px;top:299px;width:5px;height:5px;background:#a3a7a1"></i><i style="left:73px;top:294px;width:5px;height:5px;background:#9b9b9b"></i><i style="left:73px;top:299px;width:5px;height:5px;background:#bcb0ae"></i><i style="left:78px;top:294px;width:5px;height:5px;background:#8d8d8d"></i><i style="left:78px;top:299px;width:5px;height:5px;background:#918583"></i><i style="left:83px;top:294px;width:5px;height:5px;background:#a49896"></i><i style="left:83px;top:299px;width:5px;height:5px;background:#8b919f"></i><i style="left:88px;top:294px;width:5px;height:5px;background:#d5d5d5"></i><i style="left:88px;top:299px;width:5px;height:5px;background:#96968a"></i><i style="left:93px;top:294px;width:5px;height:5px;background:#ab9f9d"></i><i style="left:93px;top:299px;width:5px;height:5px;background:#c3bbaf"></i><i style="left:98px;top:294px;width:5px;height:5px;background:#d0d6e4"></i><i style="left:98px;top:299px;width:5px;height:5px;background:#bdb1af"></i><i style="left:103px;top:294px;width:5px;height:5px;background:#b7bbb5"></i><i style="left:103px;top:299px;width:5px;height:5px;background:#969696"></i><i style="left:28px;top:304px;width:80px;height:5px;background:#f7f7f7"></i><i style="left:107px;top:294px;width:2px;height:10px;background:#ffffff"></i><i style="left:107px;top:296px;width:1px;height:6px;background:#3a3a3a"></i><i style="left:20px;top:304px;width:3px;height:5px;background:#666666"></i><i style="left:28px;top:314px;width:5px;height:5px;background:#c6cac4"></i><i style="left:28px;top:319px;width:5px;height:5px;background:#aeaeae"></i><i style="left:33px;top:314px;width:5px;height:5px;background:#999999"></i><i style="left:33px;top:319px;width:5px;height:5px;background:#dee4f2"></i><i style="left:38px;top:314px;width:5px;height:5px;background:#dde3f1"></i><i style="left:38px;top:319px;width:5px;height:5px;background:#cacabe"></i><i style="left:43px;top:314px;width:5px;height:5px;background:#ebe3d7"></i><i style="left:43px;top:319px;width:5px;height:5px;background:#c9c9c9"></i><i style="left:48px;top:314px;width:5px;height:5px;background:#ab9f9d"></i><i style="left:48px;top:319px;width:5px;height:5px;background:#c1b9ad"></i><i style="left:53px;top:314px;width:5px;height:5px;background:#e9dddb"></i><i style="left:53px;top:319px;width:5px;height:5px;background:#909084"></i><i style="left:58px;top:314px;width:5px;height:5px;background:#c2c8d6"></i><i style="left:58px;top:319px;width:5px;height:5px;background:#dfdfd3"></i><i style="left:63px;top:314px;width:5px;height:5px;background:#8e9298"></i><i style="left:63px;top:319px;width:5px;height:5px;background:#b2a6a4"></i><i style="left:68px;top:314px;width:5px;height:5px;background:#c1b9ad"></i><i style="left:68px;top:319px;width:5px;height:5px;background:#babaae"></i><i style="left:73px;top:314px;width:5px;height:5px;background:#ada19f"></i><i style="left:73px;top:319px;width:5px;height:5px;background:#d2d2c6"></i><i style="left:78px;top:314px;width:5px;height:5px;background:#bfc5d3"></i><i style="left:78px;top:319px;width:5px;height:5px;background:#e4dcd0"></i><i style="left:83px;top:314px;width:5px;height:5px;background:#dbdbcf"></i><i style="left:83px;top:319px;width:5px;height:5px;background:#eeeee2"></i><i style="left:88px;top:314px;width:5px;height:5px;background:#a5a599"></i><i style="left:88px;top:319px;width:5px;height:5px;background:#abab9f"></i><i style="left:93px;top:314px;width:5px;height:5px;background:#b6bac0"></i><i style="left:93px;top:319px;width:5px;height:5px;background:#b0a89c"></i><i style="left:98px;top:314px;width:5px;height:5px;background:#cbcfc9"></i><i style="left:98px;top:319px;width:5px;height:5px;background:#b0b4ba"></i><i style="left:103px;top:314px;width:5px;height:5px;background:#8a8a8a"></i><i style="left:103px;top:319px;width:5px;height:5px;background:#acb0aa"></i><i style="left:28px;top:324px;width:80px;height:5px;background:#f7f7f7"></i><i style="left:107px;top:314px;width:2px;height:10px;background:#ffffff"></i><i style="left:107px;top:316px;width:1px;height:5px;background:#3a3a3a"></i><i style="left:20px;top:324px;width:3px;height:5px;background:#666666"></i><i style="left:28px;top:334px;width:5px;height:5px;background:#e9dddb"></i><i style="left:28px;top:339px;width:5px;height:5px;background:#b5b9b3"></i><i style="left:33px;top:334px;width:5px;height:5px;background:#dbe1ef"></i><i style="left:33px;top:339px;width:5px;height:5px;background:#b5b5b5"></i><i style="left:38px;top:334px;width:5px;height:5px;background:#a3a3a3"></i><i style="left:38px;top:339px;width:5px;height:5px;background:#a6aaa4"></i><i style="left:43px;top:334px;width:5px;height:5px;background:#989eac"></i><i style="left:43px;top:339px;width:5px;height:5px;background:#a3a7a1"></i><i style="left:48px;top:334px;width:5px;height:5px;background:#e0d4d2"></i><i style="left:48px;top:339px;width:5px;height:5px;background:#898d87"></i><i style="left:53px;top:334px;width:5px;height:5px;background:#d2d8e6"></i><i style="left:53px;top:339px;width:5px;height:5px;background:#d9d9d9"></i><i style="left:58px;top:334px;width:5px;height:5px;background:#dbdbdb"></i><i style="left:58px;top:339px;width:5px;height:5px;background:#bebeb2"></i><i style="left:63px;top:334px;width:5px;height:5px;background:#e8e8dc"></i><i style="left:63px;top:339px;width:5px;height:5px;background:#a2a6a0"></i><i style="left:68px;top:334px;width:5px;height:5px;background:#9fa39d"></i><i style="left:68px;top:339px;width:5px;height:5px;background:#d0d6e4"></i><i style="left:73px;top:334px;width:5px;height:5px;background:#98988c"></i><i style="left:73px;top:339px;width:5px;height:5px;background:#e5e9e3"></i><i style="left:78px;top:334px;width:5px;height:5px;background:#c4c8c2"></i><i style="left:78px;top:339px;width:5px;height:5px;background:#e6e6e6"></i><i style="left:83px;top:334px;width:5px;height:5px;background:#efe7db"></i><i style="left:83px;top:339px;width:5px;height:5px;background:#a8a094"></i><i style="left:88px;top:334px;width:5px;height:5px;background:#968e82"></i><i style="left:88px;top:339px;width:5px;height:5px;background:#d4d8d2"></i><i style="left:93px;top:334px;width:5px;height:5px;background:#e6ded2"></i><i style="left:93px;top:339px;width:5px;height:5px;background:#dbdbcf"></i><i style="left:98px;top:334px;width:5px;height:5px;background:#d5d9d3"></i><i style="left:98px;top:339px;width:5px;height:5px;background:#d3d9e7"></i><i style="left:103px;top:334px;width:5px;height:5px;background:#a49896"></i><i style="left:103px;top:339px;width:5px;height:5px;background:#d9d1c5"></i><i style="left:28px;top:344px;width:80px;height:5px;background:#f7f7f7"></i><i style="left:107px;top:334px;width:2px;height:10px;background:#ffffff"></i><i style="left:107px;top:334px;width:1px;height:5px;background:#3a3a3a"></i><i style="left:20px;top:344px;width:3px;height:5px;background:#666666"></i><i style="left:28px;top:354px;width:5px;height:5px;background:#dfe3e9"></i><i style="left:28px;top:359px;width:5px;height:5px;background:#9e9290"></i><i style="left:33px;top:354px;width:5px;height:5px;background:#f2eade"></i><i style="left:33px;top:359px;width:5px;height:5px;background:#c4c4b8"></i><i style="left:38px;top:354px;width:5px;height:5px;background:#a5a599"></i><i style="left:38px;top:359px;width:5px;height:5px;background:#a2a2a2"></i><i style="left:43px;top:354px;width:5px;height:5px;background:#b3ab9f"></i><i style="left:43px;top:359px;width:5px;height:5px;background:#b6aaa8"></i><i style="left:48px;top:354px;width:5px;height:5px;background:#abab9f"></i><i style="left:48px;top:359px;width:5px;height:5px;background:#cad0de"></i><i style="left:53px;top:354px;width:5px;height:5px;background:#b2a6a4"></i><i style="left:53px;top:359px;width:5px;height:5px;background:#c2c2b6"></i><i style="left:58px;top:354px;width:5px;height:5px;background:#979797"></i><i style="left:58px;top:359px;width:5px;height:5px;background:#dde3f1"></i><i style="left:63px;top:354px;width:5px;height:5px;background:#bdc1c7"></i><i style="left:63px;top:359px;width:5px;height:5px;background:#d7d7cb"></i><i style="left:68px;top:354px;width:5px;height:5px;background:#cbcfc9"></i><i style="left:68px;top:359px;width:5px;height:5px;background:#d3cbbf"></i><i style="left:73px;top:354px;width:5px;height:5px;background:#d7cfc3"></i><i style="left:73px;top:359px;width:5px;height:5px;background:#d4c8c6"></i><i style="left:78px;top:354px;width:5px;height:5px;background:#8f8f83"></i><i style="left:78px;top:359px;width:5px;height:5px;background:#c5c5b9"></i><i style="left:83px;top:354px;width:5px;height:5px;background:#a89c9a"></i><i style="left:83px;top:359px;width:5px;height:5px;background:#8d8d81"></i><i style="left:88px;top:354px;width:5px;height:5px;background:#a69e92"></i><i style="left:88px;top:359px;width:5px;height:5px;background:#9b9f99"></i><i style="left:93px;top:354px;width:5px;height:5px;background:#d2d6dc"></i><i style="left:93px;top:359px;width:5px;height:5px;background:#a09492"></i><i style="left:98px;top:354px;width:5px;height:5px;background:#868c9a"></i><i style="left:98px;top:359px;width:5px;height:5px;background:#e8dcda"></i><i style="left:103px;top:354px;width:5px;height:5px;background:#d4c8c6"></i><i style="left:103px;top:359px;width:5px;height:5px;background:#cacabe"></i><i style="left:28px;top:364px;width:80px;height:5px;background:#f7f7f7"></i><i style="left:107px;top:354px;width:2px;height:10px;background:#ffffff"></i><i style="left:107px;top:354px;width:1px;height:8px;background:#3a3a3a"></i><i style="left:20px;top:364px;width:3px;height:5px;background:#666666"></i><i style="left:28px;top:374px;width:5px;height:5px;background:#9a9286"></i><i style="left:28px;top:379px;width:5px;height:5px;background:#979dab"></i><i style="left:33px;top:374px;width:5px;height:5px;background:#929286"></i><i style="left:33px;top:379px;width:5px;height:5px;background:#9d918f"></i><i style="left:38px;top:374px;width:5px;height:5px;background:#cabebc"></i><i style="left:38px;top:379px;width:5px;height:5px;background:#909084"></i><i style="left:43px;top:374px;width:5px;height:5px;background:#91958f"></i><i style="left:43px;top:379px;width:5px;height:5px;background:#baaeac"></i><i style="left:48px;top:374px;width:5px;height:5px;background:#d1c5c3"></i><i style="left:48px;top:379px;width:5px;height:5px;background:#d4ccc0"></i><i style="left:53px;top:374px;width:5px;height:5px;background:#d7ddeb"></i><i style="left:53px;top:379px;width:5px;height:5px;background:#cabebc"></i><i style="left:58px;top:374px;width:5px;height:5px;background:#d1d1c5"></i><i style="left:58px;top:379px;width:5px;height:5px;background:#cec2c0"></i><i style="left:63px;top:374px;width:5px;height:5px;background:#a2a6ac"></i><i style="left:63px;top:379px;width:5px;height:5px;background:#c1c7d5"></i><i style="left:68px;top:374px;width:5px;height:5px;background:#dad2c6"></i><i style="left:68px;top:379px;width:5px;height:5px;background:#ccc4b8"></i><i style="left:73px;top:374px;width:5px;height:5px;background:#bcbcbc"></i><i style="left:73px;top:379px;width:5px;height:5px;background:#bbbfb9"></i><i style="left:78px;top:374px;width:5px;height:5px;background:#afafaf"></i><i style="left:78px;top:379px;width:5px;height:5px;background:#e8e0d4"></i><i style="left:83px;top:374px;width:5px;height:5px;background:#bdbdbd"></i><i style="left:83px;top:379px;width:5px;height:5px;background:#9ea2a8"></i><i style="left:88px;top:374px;width:5px;height:5px;background:#b3b3a7"></i><i style="left:88px;top:379px;width:5px;height:5px;background:#9c9c90"></i><i style="left:93px;top:374px;width:5px;height:5px;background:#969aa0"></i><i style="left:93px;top:379px;width:5px;height:5px;background:#d5d9df"></i><i style="left:98px;top:374px;width:5px;height:5px;background:#c1b9ad"></i><i style="left:98px;top:379px;width:5px;height:5px;background:#b3ab9f"></i><i style="left:103px;top:374px;width:5px;height:5px;background:#cec6ba"></i><i style="left:103px;top:379px;width:5px;height:5px;background:#e6e6e6"></i><i style="left:28px;top:384px;width:80px;height:5px;background:#f7f7f7"></i><i style="left:107px;top:374px;width:2px;height:10px;background:#ffffff"></i><i style="left:107px;top:376px;width:1px;height:6px;background:#3a3a3a"></i><i style="left:20px;top:384px;width:3px;height:5px;background:#666666"></i><i style="left:28px;top:394px;width:5px;height:5px;background:#979ba1"></i><i style="left:28px;top:399px;width:5px;height:5px;background:#afa79b"></i><i style="left:33px;top:394px;width:5px;height:5px;background:#e3e7e1"></i><i style="left:33px;top:399px;width:5px;height:5px;background:#cacec8"></i><i style="left:38px;top:394px;width:5px;height:5px;background:#b4b8b2"></i><i style="left:38px;top:399px;width:5px;height:5px;background:#989eac"></i><i style="left:43px;top:394px;width:5px;height:5px;background:#afafaf"></i><i style="left:43px;top:399px;width:5px;height:5px;background:#dbe1ef"></i><i style="left:48px;top:394px;width:5px;height:5px;background:#818795"></i><i style="left:48px;top:399px;width:5px;height:5px;background:#cfd3cd"></i><i style="left:53px;top:394px;width:5px;height:5px;background:#bbbfc5"></i><i style="left:53px;top:399px;width:5px;height:5px;background:#8b8f89"></i><i style="left:58px;top:394px;width:5px;height:5px;background:#bbafad"></i><i style="left:58px;top:399px;width:5px;height:5px;background:#ced4e2"></i><i style="left:63px;top:394px;width:5px;height:5px;background:#c8c8c8"></i><i style="left:63px;top:399px;width:5px;height:5px;background:#9b9b8f"></i><i style="left:68px;top:394px;width:5px;height:5px;background:#a4a4a4"></i><i style="left:68px;top:399px;width:5px;height:5px;background:#898f9d"></i><i style="left:73px;top:394px;width:5px;height:5px;background:#a9a9a9"></i><i style="left:73px;top:399px;width:5px;height:5px;background:#969caa"></i><i style="left:78px;top:394px;width:5px;height:5px;background:#f3ebdf"></i><i style="left:78px;top:399px;width:5px;height:5px;background:#c3c3b7"></i><i style="left:83px;top:394px;width:5px;height:5px;background:#e3e3d7"></i><i style="left:83px;top:399px;width:5px;height:5px;background:#aaaea8"></i><i style="left:88px;top:394px;width:5px;height:5px;background:#a49896"></i><i style="left:88px;top:399px;width:5px;height:5px;background:#d2c6c4"></i><i style="left:93px;top:394px;width:5px;height:5px;background:#c2c6cc"></i><i style="left:93px;top:399px;width:5px;height:5px;background:#b0b0b0"></i><i style="left:98px;top:394px;width:5px;height:5px;background:#aaaaaa"></i><i style="left:98px;top:399px;width:5px;height:5px;background:#ebe3d7"></i><i style="left:103px;top:394px;width:5px;height:5px;background:#bdbdbd"></i><i style="left:103px;top:399px;width:5px;height:5px;background:#a9a9a9"></i><i style="left:28px;top:404px;width:80px;height:5px;background:#f7f7f7"></i><i style="left:107px;top:394px;width:2px;height:10px;background:#ffffff"></i><i style="left:107px;top:398px;width:1px;height:5px;background:#3a3a3a"></i><i style="left:20px;top:404px;width:3px;height:5px;background:#666666"></i><i style="left:28px;top:414px;width:5px;height:5px;background:#a8a8a8"></i><i style="left:28px;top:419px;width:5px;height:5px;background:#dadace"></i><i style="left:33px;top:414px;width:5px;height:5px;background:#a3a3a3"></i><i style="left:33px;top:419px;width:5px;height:5px;background:#aeaea2"></i><i style="left:38px;top:414px;width:5px;height:5px;background:#989c96"></i><i style="left:38px;top:419px;width:5px;height:5px;background:#808694"></i><i style="left:43px;top:414px;width:5px;height:5px;background:#cfd3cd"></i><i style="left:43px;top:419px;width:5px;height:5px;background:#b3a7a5"></i><i style="left:48px;top:414px;width:5px;height:5px;background:#979797"></i><i style="left:48px;top:419px;width:5px;height:5px;background:#c6cad0"></i><i style="left:53px;top:414px;width:5px;height:5px;background:#a5a5a5"></i><i style="left:53px;top:419px;width:5px;height:5px;background:#9399a7"></i><i style="left:58px;top:414px;width:5px;height:5px;background:#999185"></i><i style="left:58px;top:419px;width:5px;height:5px;background:#989eac"></i><i style="left:63px;top:414px;width:5px;height:5px;background:#cfd5e3"></i><i style="left:63px;top:419px;width:5px;height:5px;background:#d0d0c4"></i><i style="left:68px;top:414px;width:5px;height:5px;background:#999fad"></i><i style="left:68px;top:419px;width:5px;height:5px;background:#cabebc"></i><i style="left:73px;top:414px;width:5px;height:5px;background:#e9e1d5"></i><i style="left:73px;top:419px;width:5px;height:5px;background:#a1a7b5"></i><i style="left:78px;top:414px;width:5px;height:5px;background:#818795"></i><i style="left:78px;top:419px;width:5px;height:5px;background:#8b8b8b"></i><i style="left:83px;top:414px;width:5px;height:5px;background:#85898f"></i><i style="left:83px;top:419px;width:5px;height:5px;background:#d1c5c3"></i><i style="left:88px;top:414px;width:5px;height:5px;background:#a99d9b"></i><i style="left:88px;top:419px;width:5px;height:5px;background:#cfc7bb"></i><i style="left:93px;top:414px;width:5px;height:5px;background:#c0c0c0"></i><i style="left:93px;top:419px;width:5px;height:5px;background:#e1e1d5"></i><i style="left:98px;top:414px;width:5px;height:5px;background:#dce0da"></i><i style="left:98px;top:419px;width:5px;height:5px;background:#dde1db"></i><i style="left:103px;top:414px;width:5px;height:5px;background:#d2d2c6"></i><i style="left:103px;top:419px;width:5px;height:5px;background:#c3b7b5"></i><i style="left:28px;top:424px;width:80px;height:5px;background:#f7f7f7"></i><i style="left:107px;top:414px;width:2px;height:10px;background:#ffffff"></i><i style="left:107px;top:416px;width:1px;height:8px;background:#3a3a3a"></i><i style="left:20px;top:424px;width:3px;height:5px;background:#666666"></i><i style="left:28px;top:434px;width:5px;height:5px;background:#aea69a"></i><i style="left:28px;top:439px;width:5px;height:5px;background:#beb6aa"></i><i style="left:33px;top:434px;width:5px;height:5px;background:#dde1e7"></i><i style="left:33px;top:439px;width:5px;height:5px;background:#e4dcd0"></i><i style="left:38px;top:434px;width:5px;height:5px;background:#b2b8c6"></i><i style="left:38px;top:439px;width:5px;height:5px;background:#939387"></i><i style="left:43px;top:434px;width:5px;height:5px;background:#979797"></i><i style="left:43px;top:439px;width:5px;height:5px;background:#8c9096"></i><i style="left:48px;top:434px;width:5px;height:5px;background:#dde3f1"></i><i style="left:48px;top:439px;width:5px;height:5px;background:#cac2b6"></i><i style="left:53px;top:434px;width:5px;height:5px;background:#8e8e8e"></i><i style="left:53px;top:439px;width:5px;height:5px;background:#e2e2d6"></i><i style="left:58px;top:434px;width:5px;height:5px;background:#bdbdb1"></i><i style="left:58px;top:439px;width:5px;height:5px;background:#c3c7cd"></i><i style="left:63px;top:434px;width:5px;height:5px;background:#b5a9a7"></i><i style="left:63px;top:439px;width:5px;height:5px;background:#a2a6ac"></i><i style="left:68px;top:434px;width:5px;height:5px;background:#acacac"></i><i style="left:68px;top:439px;width:5px;height:5px;background:#cdc5b9"></i><i style="left:73px;top:434px;width:5px;height:5px;background:#9399a7"></i><i style="left:73px;top:439px;width:5px;height:5px;background:#c0c0c0"></i><i style="left:78px;top:434px;width:5px;height:5px;background:#a0a6b4"></i><i style="left:78px;top:439px;width:5px;height:5px;background:#bbafad"></i><i style="left:83px;top:434px;width:5px;height:5px;background:#bcb4a8"></i><i style="left:83px;top:439px;width:5px;height:5px;background:#838997"></i><i style="left:88px;top:434px;width:5px;height:5px;background:#9aa0ae"></i><i style="left:88px;top:439px;width:5px;height:5px;background:#9e9e9e"></i><i style="left:93px;top:434px;width:5px;height:5px;background:#b3b7b1"></i><i style="left:93px;top:439px;width:5px;height:5px;background:#939791"></i><i style="left:98px;top:434px;width:5px;height:5px;background:#b4a8a6"></i><i style="left:98px;top:439px;width:5px;height:5px;background:#e6ded2"></i><i style="left:103px;top:434px;width:5px;height:5px;background:#b0a4a2"></i><i style="left:103px;top:439px;width:5px;height:5px;background:#878787"></i><i style="left:28px;top:444px;width:80px;height:5px;background:#f7f7f7"></i><i style="left:107px;top:434px;width:2px;height:10px;background:#ffffff"></i><i style="left:107px;top:436px;width:1px;height:5px;background:#3a3a3a"></i><i style="left:20px;top:444px;width:3px;height:5px;background:#666666"></i><i style="left:28px;top:454px;width:5px;height:5px;background:#9b9f99"></i><i style="left:28px;top:459px;width:5px;height:5px;background:#d2d2d2"></i><i style="left:33px;top:454px;width:5px;height:5px;background:#b9b9b9"></i><i style="left:33px;top:459px;width:5px;height:5px;background:#a5abb9"></i><i style="left:38px;top:454px;width:5px;height:5px;background:#e3dbcf"></i><i style="left:38px;top:459px;width:5px;height:5px;background:#9b8f8d"></i><i style="left:43px;top:454px;width:5px;height:5px;background:#d0d0c4"></i><i style="left:43px;top:459px;width:5px;height:5px;background:#f3ebdf"></i><i style="left:48px;top:454px;width:5px;height:5px;background:#d7dbe1"></i><i style="left:48px;top:459px;width:5px;height:5px;background:#d5d9d3"></i><i style="left:53px;top:454px;width:5px;height:5px;background:#e0e6f4"></i><i style="left:53px;top:459px;width:5px;height:5px;background:#e5e9e3"></i><i style="left:58px;top:454px;width:5px;height:5px;background:#9298a6"></i><i style="left:58px;top:459px;width:5px;height:5px;background:#ede1df"></i><i style="left:63px;top:454px;width:5px;height:5px;background:#e5ddd1"></i><i style="left:63px;top:459px;width:5px;height:5px;background:#929286"></i><i style="left:68px;top:454px;width:5px;height:5px;background:#ece0de"></i><i style="left:68px;top:459px;width:5px;height:5px;background:#d9ddd7"></i><i style="left:73px;top:454px;width:5px;height:5px;background:#e0e4ea"></i><i style="left:73px;top:459px;width:5px;height:5px;background:#d3cbbf"></i><i style="left:78px;top:454px;width:5px;height:5px;background:#d0d0c4"></i><i style="left:78px;top:459px;width:5px;height:5px;background:#d1c5c3"></i><i style="left:83px;top:454px;width:5px;height:5px;background:#8f8f83"></i><i style="left:83px;top:459px;width:5px;height:5px;background:#e8dcda"></i><i style="left:88px;top:454px;width:5px;height:5px;background:#dee2e8"></i><i style="left:88px;top:459px;width:5px;height:5px;background:#dbdfe5"></i><i style="left:93px;top:454px;width:5px;height:5px;background:#a4a4a4"></i><i style="left:93px;top:459px;width:5px;height:5px;background:#8a8a8a"></i><i style="left:98px;top:454px;width:5px;height:5px;background:#94989e"></i><i style="left:98px;top:459px;width:5px;height:5px;background:#b5b5b5"></i><i style="left:103px;top:454px;width:5px;height:5px;background:#bdbdb1"></i><i style="left:103px;top:459px;width:5px;height:5px;background:#cabebc"></i><i style="left:28px;top:464px;width:80px;height:5px;background:#f7f7f7"></i><i style="left:107px;top:454px;width:2px;height:10px;background:#ffffff"></i><i style="left:107px;top:454px;width:1px;height:8px;background:#3a3a3a"></i><i style="left:20px;top:464px;width:3px;height:5px;background:#666666"></i><i style="left:28px;top:474px;width:5px;height:5px;background:#85898f"></i><i style="left:28px;top:479px;width:5px;height:5px;background:#c7cbd1"></i><i style="left:33px;top:474px;width:5px;height:5px;background:#a8aca6"></i><i style="left:33px;top:479px;width:5px;height:5px;background:#a8a8a8"></i><i style="left:38px;top:474px;width:5px;height:5px;background:#c7c7bb"></i><i style="left:38px;top:479px;width:5px;height:5px;background:#8b8f95"></i><i style="left:43px;top:474px;width:5px;height:5px;background:#d1c5c3"></i><i style="left:43px;top:479px;width:5px;height:5px;background:#8e9298"></i><i style="left:48px;top:474px;width:5px;height:5px;background:#cacaca"></i><i style="left:48px;top:479px;width:5px;height:5px;background:#e2e6ec"></i><i style="left:53px;top:474px;width:5px;height:5px;background:#bbc1cf"></i><i style="left:53px;top:479px;width:5px;height:5px;background:#96968a"></i><i style="left:58px;top:474px;width:5px;height:5px;background:#b4aca0"></i><i style="left:58px;top:479px;width:5px;height:5px;background:#eaeade"></i><i style="left:63px;top:474px;width:5px;height:5px;background:#ada599"></i><i style="left:63px;top:479px;width:5px;height:5px;background:#e1e5eb"></i><i style="left:68px;top:474px;width:5px;height:5px;background:#c3c7c1"></i><i style="left:68px;top:479px;width:5px;height:5px;background:#b7b7b7"></i><i style="left:73px;top:474px;width:5px;height:5px;background:#c0c4ca"></i><i style="left:73px;top:479px;width:5px;height:5px;background:#b1b1a5"></i><i style="left:78px;top:474px;width:5px;height:5px;background:#968a88"></i><i style="left:78px;top:479px;width:5px;height:5px;background:#d3d7dd"></i><i style="left:83px;top:474px;width:5px;height:5px;background:#a0a0a0"></i><i style="left:83px;top:479px;width:5px;height:5px;background:#dfd7cb"></i><i style="left:88px;top:474px;width:5px;height:5px;background:#a9afbd"></i><i style="left:88px;top:479px;width:5px;height:5px;background:#d6dae0"></i><i style="left:93px;top:474px;width:5px;height:5px;background:#d7ddeb"></i><i style="left:93px;top:479px;width:5px;height:5px;background:#e0d4d2"></i><i style="left:98px;top:474px;width:5px;height:5px;background:#989898"></i><i style="left:98px;top:479px;width:5px;height:5px;background:#c4c4c4"></i><i style="left:103px;top:474px;width:5px;height:5px;background:#bdc3d1"></i><i style="left:103px;top:479px;width:5px;height:5px;background:#dddddd"></i><i style="left:28px;top:484px;width:80px;height:5px;background:#f7f7f7"></i><i style="left:107px;top:474px;width:2px;height:10px;background:#ffffff"></i><i style="left:107px;top:478px;width:1px;height:5px;background:#3a3a3a"></i><i style="left:20px;top:484px;width:3px;height:5px;background:#666666"></i><i style="left:28px;top:494px;width:5px;height:5px;background:#dfe3dd"></i><i style="left:28px;top:499px;width:5px;height:5px;background:#a8acb2"></i><i style="left:33px;top:494px;width:5px;height:5px;background:#c1c7d5"></i><i style="left:33px;top:499px;width:5px;height:5px;background:#c4c8c2"></i><i style="left:38px;top:494px;width:5px;height:5px;background:#c8c8bc"></i><i style="left:38px;top:499px;width:5px;height:5px;background:#a09492"></i><i style="left:43px;top:494px;width:5px;height:5px;background:#989eac"></i><i style="left:43px;top:499px;width:5px;height:5px;background:#939791"></i><i style="left:48px;top:494px;width:5px;height:5px;background:#818795"></i><i style="left:48px;top:499px;width:5px;height:5px;background:#c1c1c1"></i><i style="left:53px;top:494px;width:5px;height:5px;background:#c9cdc7"></i><i style="left:53px;top:499px;width:5px;height:5px;background:#abafa9"></i><i style="left:58px;top:494px;width:5px;height:5px;background:#ada599"></i><i style="left:58px;top:499px;width:5px;height:5px;background:#9a8e8c"></i><i style="left:63px;top:494px;width:5px;height:5px;background:#9e968a"></i><i style="left:63px;top:499px;width:5px;height:5px;background:#f0e4e2"></i><i style="left:68px;top:494px;width:5px;height:5px;background:#a0a6b4"></i><i style="left:68px;top:499px;width:5px;height:5px;background:#a19593"></i><i style="left:73px;top:494px;width:5px;height:5px;background:#e1d5d3"></i><i style="left:73px;top:499px;width:5px;height:5px;background:#aaaaaa"></i><i style="left:78px;top:494px;width:5px;height:5px;background:#d9dfed"></i><i style="left:78px;top:499px;width:5px;height:5px;background:#a6aaa4"></i><i style="left:83px;top:494px;width:5px;height:5px;background:#c7cbc5"></i><i style="left:83px;top:499px;width:5px;height:5px;background:#968e82"></i><i style="left:88px;top:494px;width:5px;height:5px;background:#898d87"></i><i style="left:88px;top:499px;width:5px;height:5px;background:#e0e4de"></i><i style="left:93px;top:494px;width:5px;height:5px;background:#b2b8c6"></i><i style="left:93px;top:499px;width:5px;height:5px;background:#f0e8dc"></i><i style="left:98px;top:494px;width:5px;height:5px;background:#b4bac8"></i><i style="left:98px;top:499px;width:5px;height:5px;background:#afb5c3"></i><i style="left:103px;top:494px;width:5px;height:5px;background:#9c9c90"></i><i style="left:103px;top:499px;width:5px;height:5px;background:#b1b1b1"></i><i style="left:28px;top:504px;width:80px;height:5px;background:#f7f7f7"></i><i style="left:107px;top:494px;width:2px;height:10px;background:#ffffff"></i><i style="left:107px;top:496px;width:1px;height:6px;background:#3a3a3a"></i><i style="left:20px;top:504px;width:3px;height:5px;background:#666666"></i><i style="left:28px;top:514px;width:5px;height:5px;background:#b9b9b9"></i><i style="left:28px;top:519px;width:5px;height:5px;background:#9ca0a6"></i><i style="left:33px;top:514px;width:5px;height:5px;background:#84888e"></i><i style="left:33px;top:519px;width:5px;height:5px;background:#a4aab8"></i><i style="left:38px;top:514px;width:5px;height:5px;background:#b6b6b6"></i><i style="left:38px;top:519px;width:5px;height:5px;background:#bbbfb9"></i><i style="left:43px;top:514px;width:5px;height:5px;background:#d2d2d2"></i><i style="left:43px;top:519px;width:5px;height:5px;background:#b7bbb5"></i><i style="left:48px;top:514px;width:5px;height:5px;background:#dfe5f3"></i><i style="left:48px;top:519px;width:5px;height:5px;background:#858b99"></i><i style="left:53px;top:514px;width:5px;height:5px;background:#949494"></i><i style="left:53px;top:519px;width:5px;height:5px;background:#d3d9e7"></i><i style="left:58px;top:514px;width:5px;height:5px;background:#e4dcd0"></i><i style="left:58px;top:519px;width:5px;height:5px;background:#9ea4b2"></i><i style="left:63px;top:514px;width:5px;height:5px;background:#c8bcba"></i><i style="left:63px;top:519px;width:5px;height:5px;background:#bbb3a7"></i><i style="left:68px;top:514px;width:5px;height:5px;background:#bcbcb0"></i><i style="left:68px;top:519px;width:5px;height:5px;background:#bdbdbd"></i><i style="left:73px;top:514px;width:5px;height:5px;background:#e4e8ee"></i><i style="left:73px;top:519px;width:5px;height:5px;background:#c4b8b6"></i><i style="left:78px;top:514px;width:5px;height:5px;background:#d9d1c5"></i><i style="left:78px;top:519px;width:5px;height:5px;background:#e3e3e3"></i><i style="left:83px;top:514px;width:5px;height:5px;background:#898d93"></i><i style="left:83px;top:519px;width:5px;height:5px;background:#bdc1bb"></i><i style="left:88px;top:514px;width:5px;height:5px;background:#dbdbcf"></i><i style="left:88px;top:519px;width:5px;height:5px;background:#94989e"></i><i style="left:93px;top:514px;width:5px;height:5px;background:#adb1ab"></i><i style="left:93px;top:519px;width:5px;height:5px;background:#978b89"></i><i style="left:98px;top:514px;width:5px;height:5px;background:#a39b8f"></i><i style="left:98px;top:519px;width:5px;height:5px;background:#c5c9c3"></i><i style="left:103px;top:514px;width:5px;height:5px;background:#aab0be"></i><i style="left:103px;top:519px;width:5px;height:5px;background:#a5abb9"></i><i style="left:28px;top:524px;width:80px;height:5px;background:#f7f7f7"></i><i style="left:107px;top:514px;width:2px;height:10px;background:#ffffff"></i><i style="left:107px;top:518px;width:1px;height:8px;background:#3a3a3a"></i><i style="left:20px;top:524px;width:3px;height:5px;background:#666666"></i><i style="left:28px;top:534px;width:5px;height:5px;background:#d2d8e6"></i><i style="left:28px;top:539px;width:5px;height:5px;background:#b6bac0"></i><i style="left:33px;top:534px;width:5px;height:5px;background:#9da3b1"></i><i style="left:33px;top:539px;width:5px;height:5px;background:#cec2c0"></i><i style="left:38px;top:534px;width:5px;height:5px;background:#dee2dc"></i><i style="left:38px;top:539px;width:5px;height:5px;background:#a29a8e"></i><i style="left:43px;top:534px;width:5px;height:5px;background:#e5ddd1"></i><i style="left:43px;top:539px;width:5px;height:5px;background:#9c9488"></i><i style="left:48px;top:534px;width:5px;height:5px;background:#cdcdc1"></i><i style="left:48px;top:539px;width:5px;height:5px;background:#d0c4c2"></i><i style="left:53px;top:534px;width:5px;height:5px;background:#a5a9a3"></i><i style="left:53px;top:539px;width:5px;height:5px;background:#b7b7ab"></i><i style="left:58px;top:534px;width:5px;height:5px;background:#c2c6c0"></i><i style="left:58px;top:539px;width:5px;height:5px;background:#a29694"></i><i style="left:63px;top:534px;width:5px;height:5px;background:#aba397"></i><i style="left:63px;top:539px;width:5px;height:5px;background:#9e968a"></i><i style="left:68px;top:534px;width:5px;height:5px;background:#bcb0ae"></i><i style="left:68px;top:539px;width:5px;height:5px;background:#8a909e"></i><i style="left:73px;top:534px;width:5px;height:5px;background:#9da3b1"></i><i style="left:73px;top:539px;width:5px;height:5px;background:#aeaea2"></i><i style="left:78px;top:534px;width:5px;height:5px;background:#dbd3c7"></i><i style="left:78px;top:539px;width:5px;height:5px;background:#85898f"></i><i style="left:83px;top:534px;width:5px;height:5px;background:#bdc1bb"></i><i style="left:83px;top:539px;width:5px;height:5px;background:#b7bbc1"></i><i style="left:88px;top:534px;width:5px;height:5px;background:#d6cec2"></i><i style="left:88px;top:539px;width:5px;height:5px;background:#afb5c3"></i><i style="left:93px;top:534px;width:5px;height:5px;background:#b8b8ac"></i><i style="left:93px;top:539px;width:5px;height:5px;background:#90948e"></i><i style="left:98px;top:534px;width:5px;height:5px;background:#b4a8a6"></i><i style="left:98px;top:539px;width:5px;height:5px;background:#c1b9ad"></i><i style="left:103px;top:534px;width:5px;height:5px;background:#e8dcda"></i><i style="left:103px;top:539px;width:5px;height:5px;background:#c6cad0"></i><i style="left:28px;top:544px;width:80px;height:5px;background:#f7f7f7"></i><i style="left:107px;top:534px;width:2px;height:10px;background:#ffffff"></i><i style="left:107px;top:534px;width:1px;height:5px;background:#3a3a3a"></i><i style="left:20px;top:544px;width:3px;height:5px;background:#666666"></i><i style="left:28px;top:554px;width:5px;height:5px;background:#b5ada1"></i><i style="left:28px;top:559px;width:5px;height:5px;background:#babeb8"></i><i style="left:33px;top:554px;width:5px;height:5px;background:#dbdfd9"></i><i style="left:33px;top:559px;width:5px;height:5px;background:#b6bcca"></i><i style="left:38px;top:554px;width:5px;height:5px;background:#958d81"></i><i style="left:38px;top:559px;width:5px;height:5px;background:#8d918b"></i><i style="left:43px;top:554px;width:5px;height:5px;background:#e7e7db"></i><i style="left:43px;top:559px;width:5px;height:5px;background:#cdc1bf"></i><i style="left:48px;top:554px;width:5px;height:5px;background:#c5c5c5"></i><i style="left:48px;top:559px;width:5px;height:5px;background:#929690"></i><i style="left:53px;top:554px;width:5px;height:5px;background:#d0d0c4"></i><i style="left:53px;top:559px;width:5px;height:5px;background:#c4c8c2"></i><i style="left:58px;top:554px;width:5px;height:5px;background:#acaca0"></i><i style="left:58px;top:559px;width:5px;height:5px;background:#a0988c"></i><i style="left:63px;top:554px;width:5px;height:5px;background:#a69e92"></i><i style="left:63px;top:559px;width:5px;height:5px;background:#c5c9cf"></i><i style="left:68px;top:554px;width:5px;height:5px;background:#9a9a8e"></i><i style="left:68px;top:559px;width:5px;height:5px;background:#dfe3e9"></i><i style="left:73px;top:554px;width:5px;height:5px;background:#dfdfd3"></i><i style="left:73px;top:559px;width:5px;height:5px;background:#eaeee8"></i><i style="left:78px;top:554px;width:5px;height:5px;background:#9b8f8d"></i><i style="left:78px;top:559px;width:5px;height:5px;background:#8c8c8c"></i><i style="left:83px;top:554px;width:5px;height:5px;background:#a39b8f"></i><i style="left:83px;top:559px;width:5px;height:5px;background:#cfcfcf"></i><i style="left:88px;top:554px;width:5px;height:5px;background:#d5d9df"></i><i style="left:88px;top:559px;width:5px;height:5px;background:#b9b1a5"></i><i style="left:93px;top:554px;width:5px;height:5px;background:#cfd5e3"></i><i style="left:93px;top:559px;width:5px;height:5px;background:#c6cad0"></i><i style="left:98px;top:554px;width:5px;height:5px;background:#babec4"></i><i style="left:98px;top:559px;width:5px;height:5px;background:#e8e8e8"></i><i style="left:103px;top:554px;width:5px;height:5px;background:#939393"></i><i style="left:103px;top:559px;width:5px;height:5px;background:#b7aba9"></i><i style="left:28px;top:564px;width:80px;height:5px;background:#f7f7f7"></i><i style="left:107px;top:554px;width:2px;height:10px;background:#ffffff"></i><i style="left:107px;top:558px;width:1px;height:5px;background:#3a3a3a"></i><i style="left:20px;top:564px;width:3px;height:5px;background:#666666"></i><i style="left:28px;top:574px;width:5px;height:5px;background:#b0b6c4"></i><i style="left:28px;top:579px;width:5px;height:5px;background:#a9a99d"></i><i style="left:33px;top:574px;width:5px;height:5px;background:#d3d3d3"></i><i style="left:33px;top:579px;width:5px;height:5px;background:#928684"></i><i style="left:38px;top:574px;width:5px;height:5px;background:#afb3ad"></i><i style="left:38px;top:579px;width:5px;height:5px;background:#a2a8b6"></i><i style="left:43px;top:574px;width:5px;height:5px;background:#dfdfd3"></i><i style="left:43px;top:579px;width:5px;height:5px;background:#a8aca6"></i><i style="left:48px;top:574px;width:5px;height:5px;background:#d6cec2"></i><i style="left:48px;top:579px;width:5px;height:5px;background:#d9d1c5"></i><i style="left:53px;top:574px;width:5px;height:5px;background:#8c908a"></i><i style="left:53px;top:579px;width:5px;height:5px;background:#dde1e7"></i><i style="left:58px;top:574px;width:5px;height:5px;background:#aeaeae"></i><i style="left:58px;top:579px;width:5px;height:5px;background:#958d81"></i><i style="left:63px;top:574px;width:5px;height:5px;background:#c2c6cc"></i><i style="left:63px;top:579px;width:5px;height:5px;background:#dbdfd9"></i><i style="left:68px;top:574px;width:5px;height:5px;background:#898f9d"></i><i style="left:68px;top:579px;width:5px;height:5px;background:#a0a4aa"></i><i style="left:73px;top:574px;width:5px;height:5px;background:#b5bbc9"></i><i style="left:73px;top:579px;width:5px;height:5px;background:#a6aaa4"></i><i style="left:78px;top:574px;width:5px;height:5px;background:#878b91"></i><i style="left:78px;top:579px;width:5px;height:5px;background:#aeb2b8"></i><i style="left:83px;top:574px;width:5px;height:5px;background:#b4bac8"></i><i style="left:83px;top:579px;width:5px;height:5px;background:#e0e4de"></i><i style="left:88px;top:574px;width:5px;height:5px;background:#a0a0a0"></i><i style="left:88px;top:579px;width:5px;height:5px;background:#a8acb2"></i><i style="left:93px;top:574px;width:5px;height:5px;background:#c7c7c7"></i><i style="left:93px;top:579px;width:5px;height:5px;background:#a3a7a1"></i><i style="left:98px;top:574px;width:5px;height:5px;background:#989eac"></i><i style="left:98px;top:579px;width:5px;height:5px;background:#aba397"></i><i style="left:103px;top:574px;width:5px;height:5px;background:#cec6ba"></i><i style="left:103px;top:579px;width:5px;height:5px;background:#aeaea2"></i><i style="left:28px;top:584px;width:80px;height:5px;background:#f7f7f7"></i><i style="left:107px;top:574px;width:2px;height:10px;background:#ffffff"></i><i style="left:107px;top:576px;width:1px;height:5px;background:#3a3a3a"></i><i style="left:20px;top:584px;width:3px;height:5px;background:#666666"></i><i style="left:28px;top:594px;width:5px;height:5px;background:#d8dcd6"></i><i style="left:28px;top:599px;width:5px;height:5px;background:#e1d9cd"></i><i style="left:33px;top:594px;width:5px;height:5px;background:#a5a9a3"></i><i style="left:33px;top:599px;width:5px;height:5px;background:#b8bcc2"></i><i style="left:38px;top:594px;width:5px;height:5px;background:#988c8a"></i><i style="left:38px;top:599px;width:5px;height:5px;background:#9b9f99"></i><i style="left:43px;top:594px;width:5px;height:5px;background:#999185"></i><i style="left:43px;top:599px;width:5px;height:5px;background:#948886"></i><i style="left:48px;top:594px;width:5px;height:5px;background:#9b9f99"></i><i style="left:48px;top:599px;width:5px;height:5px;background:#898d93"></i><i style="left:53px;top:594px;width:5px;height:5px;background:#9a9286"></i><i style="left:53px;top:599px;width:5px;height:5px;background:#bbbfb9"></i><i style="left:58px;top:594px;width:5px;height:5px;background:#dae0ee"></i><i style="left:58px;top:599px;width:5px;height:5px;background:#e4e4e4"></i><i style="left:63px;top:594px;width:5px;height:5px;background:#9d9589"></i><i style="left:63px;top:599px;width:5px;height:5px;background:#bdb5a9"></i><i style="left:68px;top:594px;width:5px;height:5px;background:#9a9ea4"></i><i style="left:68px;top:599px;width:5px;height:5px;background:#c6cad0"></i><i style="left:73px;top:594px;width:5px;height:5px;background:#c2c2c2"></i><i style="left:73px;top:599px;width:5px;height:5px;background:#aaaeb4"></i><i style="left:78px;top:594px;width:5px;height:5px;background:#e5e9e3"></i><i style="left:78px;top:599px;width:5px;height:5px;background:#aeb4c2"></i><i style="left:83px;top:594px;width:5px;height:5px;background:#cbc3b7"></i><i style="left:83px;top:599px;width:5px;height:5px;background:#949494"></i><i style="left:88px;top:594px;width:5px;height:5px;background:#898f9d"></i><i style="left:88px;top:599px;width:5px;height:5px;background:#898f9d"></i><i style="left:93px;top:594px;width:5px;height:5px;background:#bcbcbc"></i><i style="left:93px;top:599px;width:5px;height:5px;background:#d4d4c8"></i><i style="left:98px;top:594px;width:5px;height:5px;background:#a3a7a1"></i><i style="left:98px;top:599px;width:5px;height:5px;background:#babaae"></i><i style="left:103px;top:594px;width:5px;height:5px;background:#b4b4a8"></i><i style="left:103px;top:599px;width:5px;height:5px;background:#bebebe"></i><i style="left:28px;top:604px;width:80px;height:5px;background:#f7f7f7"></i><i style="left:107px;top:594px;width:2px;height:10px;background:#ffffff"></i><i style="left:107px;top:594px;width:1px;height:8px;background:#3a3a3a"></i><i style="left:20px;top:604px;width:3px;height:5px;background:#666666"></i><i style="left:28px;top:614px;width:5px;height:5px;background:#cfc7bb"></i><i style="left:28px;top:619px;width:5px;height:5px;background:#c0b4b2"></i><i style="left:33px;top:614px;width:5px;height:5px;background:#ccc4b8"></i><i style="left:33px;top:619px;width:5px;height:5px;background:#a8aebc"></i><i style="left:38px;top:614px;width:5px;height:5px;background:#e7ebe5"></i><i style="left:38px;top:619px;width:5px;height:5px;background:#868a90"></i><i style="left:43px;top:614px;width:5px;height:5px;background:#c7bfb3"></i><i style="left:43px;top:619px;width:5px;height:5px;background:#ddddd1"></i><i style="left:48px;top:614px;width:5px;height:5px;background:#bababa"></i><i style="left:48px;top:619px;width:5px;height:5px;background:#b7b7b7"></i><i style="left:53px;top:614px;width:5px;height:5px;background:#c2c2c2"></i><i style="left:53px;top:619px;width:5px;height:5px;background:#868c9a"></i><i style="left:58px;top:614px;width:5px;height:5px;background:#9b9fa5"></i><i style="left:58px;top:619px;width:5px;height:5px;background:#998d8b"></i><i style="left:63px;top:614px;width:5px;height:5px;background:#aab0be"></i><i style="left:63px;top:619px;width:5px;height:5px;background:#a1a7b5"></i><i style="left:68px;top:614px;width:5px;height:5px;background:#d5d5d5"></i><i style="left:68px;top:619px;width:5px;height:5px;background:#a4a8ae"></i><i style="left:73px;top:614px;width:5px;height:5px;background:#dee2e8"></i><i style="left:73px;top:619px;width:5px;height:5px;background:#a7adbb"></i><i style="left:78px;top:614px;width:5px;height:5px;background:#adadad"></i><i style="left:78px;top:619px;width:5px;height:5px;background:#e9e9dd"></i><i style="left:83px;top:614px;width:5px;height:5px;background:#d9d9cd"></i><i style="left:83px;top:619px;width:5px;height:5px;background:#d8d8d8"></i><i style="left:88px;top:614px;width:5px;height:5px;background:#909084"></i><i style="left:88px;top:619px;width:5px;height:5px;background:#a4a4a4"></i><i style="left:93px;top:614px;width:5px;height:5px;background:#bfc3c9"></i><i style="left:93px;top:619px;width:5px;height:5px;background:#c8c8bc"></i><i style="left:98px;top:614px;width:5px;height:5px;background:#bebeb2"></i><i style="left:98px;top:619px;width:5px;height:5px;background:#a9ada7"></i><i style="left:103px;top:614px;width:5px;height:5px;background:#d2cabe"></i><i style="left:103px;top:619px;width:5px;height:5px;background:#d2cabe"></i><i style="left:28px;top:624px;width:80px;height:5px;background:#f7f7f7"></i><i style="left:107px;top:614px;width:2px;height:10px;background:#ffffff"></i><i style="left:107px;top:614px;width:1px;height:8px;background:#3a3a3a"></i><i style="left:20px;top:624px;width:3px;height:5px;background:#666666"></i><i style="left:28px;top:634px;width:5px;height:5px;background:#b3b3a7"></i><i style="left:28px;top:639px;width:5px;height:5px;background:#e5e5d9"></i><i style="left:33px;top:634px;width:5px;height:5px;background:#a49896"></i><i style="left:33px;top:639px;width:5px;height:5px;background:#9da3b1"></i><i style="left:38px;top:634px;width:5px;height:5px;background:#b1b5af"></i><i style="left:38px;top:639px;width:5px;height:5px;background:#bbbbaf"></i><i style="left:43px;top:634px;width:5px;height:5px;background:#d3d3d3"></i><i style="left:43px;top:639px;width:5px;height:5px;background:#d4ccc0"></i><i style="left:48px;top:634px;width:5px;height:5px;background:#bfbfb3"></i><i style="left:48px;top:639px;width:5px;height:5px;background:#a79f93"></i><i style="left:53px;top:634px;width:5px;height:5px;background:#bbbbbb"></i><i style="left:53px;top:639px;width:5px;height:5px;background:#dadada"></i><i style="left:58px;top:634px;width:5px;height:5px;background:#cec2c0"></i><i style="left:58px;top:639px;width:5px;height:5px;background:#c4cad8"></i><i style="left:63px;top:634px;width:5px;height:5px;background:#9da19b"></i><i style="left:63px;top:639px;width:5px;height:5px;background:#949494"></i><i style="left:68px;top:634px;width:5px;height:5px;background:#b2a6a4"></i><i style="left:68px;top:639px;width:5px;height:5px;background:#9d9589"></i><i style="left:73px;top:634px;width:5px;height:5px;background:#959993"></i><i style="left:73px;top:639px;width:5px;height:5px;background:#c2c6cc"></i><i style="left:78px;top:634px;width:5px;height:5px;background:#ccc4b8"></i><i style="left:78px;top:639px;width:5px;height:5px;background:#b0a89c"></i><i style="left:83px;top:634px;width:5px;height:5px;background:#bec2bc"></i><i style="left:83px;top:639px;width:5px;height:5px;background:#d2d6dc"></i><i style="left:88px;top:634px;width:5px;height:5px;background:#a1a5ab"></i><i style="left:88px;top:639px;width:5px;height:5px;background:#d1d1c5"></i><i style="left:93px;top:634px;width:5px;height:5px;background:#e2e2d6"></i><i style="left:93px;top:639px;width:5px;height:5px;background:#9c9c90"></i><i style="left:98px;top:634px;width:5px;height:5px;background:#a4aab8"></i><i style="left:98px;top:639px;width:5px;height:5px;background:#b4a8a6"></i><i style="left:103px;top:634px;width:5px;height:5px;background:#a1a7b5"></i><i style="left:103px;top:639px;width:5px;height:5px;background:#a3a7ad"></i><i style="left:28px;top:644px;width:80px;height:5px;background:#f7f7f7"></i><i style="left:107px;top:634px;width:2px;height:10px;background:#ffffff"></i><i style="left:107px;top:636px;width:1px;height:5px;background:#3a3a3a"></i><i style="left:20px;top:644px;width:3px;height:5px;background:#666666"></i><i style="left:28px;top:654px;width:5px;height:5px;background:#cbc3b7"></i><i style="left:28px;top:659px;width:5px;height:5px;background:#aaa296"></i><i style="left:33px;top:654px;width:5px;height:5px;background:#b1a99d"></i><i style="left:33px;top:659px;width:5px;height:5px;background:#b5a9a7"></i><i style="left:38px;top:654px;width:5px;height:5px;background:#979dab"></i><i style="left:38px;top:659px;width:5px;height:5px;background:#91958f"></i><i style="left:43px;top:654px;width:5px;height:5px;background:#b3ab9f"></i><i style="left:43px;top:659px;width:5px;height:5px;background:#d1c5c3"></i><i style="left:48px;top:654px;width:5px;height:5px;background:#a0a4aa"></i><i style="left:48px;top:659px;width:5px;height:5px;background:#8f9399"></i><i style="left:53px;top:654px;width:5px;height:5px;background:#c2c2c2"></i><i style="left:53px;top:659px;width:5px;height:5px;background:#949494"></i><i style="left:58px;top:654px;width:5px;height:5px;background:#c9c9bd"></i><i style="left:58px;top:659px;width:5px;height:5px;background:#aaaa9e"></i><i style="left:63px;top:654px;width:5px;height:5px;background:#b8becc"></i><i style="left:63px;top:659px;width:5px;height:5px;background:#848a98"></i><i style="left:68px;top:654px;width:5px;height:5px;background:#a4a4a4"></i><i style="left:68px;top:659px;width:5px;height:5px;background:#999185"></i><i style="left:73px;top:654px;width:5px;height:5px;background:#d9d9cd"></i><i style="left:73px;top:659px;width:5px;height:5px;background:#ddd5c9"></i><i style="left:78px;top:654px;width:5px;height:5px;background:#888e9c"></i><i style="left:78px;top:659px;width:5px;height:5px;background:#cecec2"></i><i style="left:83px;top:654px;width:5px;height:5px;background:#9fa39d"></i><i style="left:83px;top:659px;width:5px;height:5px;background:#ccd2e0"></i><i style="left:88px;top:654px;width:5px;height:5px;background:#dcdcdc"></i><i style="left:88px;top:659px;width:5px;height:5px;background:#90949a"></i><i style="left:93px;top:654px;width:5px;height:5px;background:#cfd3d9"></i><i style="left:93px;top:659px;width:5px;height:5px;background:#ced4e2"></i><i style="left:98px;top:654px;width:5px;height:5px;background:#a2a2a2"></i><i style="left:98px;top:659px;width:5px;height:5px;background:#aeb4c2"></i><i style="left:103px;top:654px;width:5px;height:5px;background:#999999"></i><i style="left:103px;top:659px;width:5px;height:5px;background:#999fad"></i><i style="left:28px;top:664px;width:80px;height:5px;background:#f7f7f7"></i><i style="left:107px;top:654px;width:2px;height:10px;background:#ffffff"></i><i style="left:107px;top:654px;width:1px;height:8px;background:#3a3a3a"></i><i style="left:20px;top:664px;width:3px;height:5px;background:#666666"></i><i style="left:28px;top:674px;width:5px;height:5px;background:#e0e4ea"></i><i style="left:28px;top:679px;width:5px;height:5px;background:#a7a79b"></i><i style="left:33px;top:674px;width:5px;height:5px;background:#8e8e82"></i><i style="left:33px;top:679px;width:5px;height:5px;background:#b2b6b0"></i><i style="left:38px;top:674px;width:5px;height:5px;background:#d5dbe9"></i><i style="left:38px;top:679px;width:5px;height:5px;background:#a89c9a"></i><i style="left:43px;top:674px;width:5px;height:5px;background:#aeaeae"></i><i style="left:43px;top:679px;width:5px;height:5px;background:#a1a1a1"></i><i style="left:48px;top:674px;width:5px;height:5px;background:#d0c4c2"></i><i style="left:48px;top:679px;width:5px;height:5px;background:#c4c4c4"></i><i style="left:53px;top:674px;width:5px;height:5px;background:#bbbbbb"></i><i style="left:53px;top:679px;width:5px;height:5px;background:#b5b9bf"></i><i style="left:58px;top:674px;width:5px;height:5px;background:#d9d1c5"></i><i style="left:58px;top:679px;width:5px;height:5px;background:#e2d6d4"></i><i style="left:63px;top:674px;width:5px;height:5px;background:#8e9298"></i><i style="left:63px;top:679px;width:5px;height:5px;background:#9da19b"></i><i style="left:68px;top:674px;width:5px;height:5px;background:#d8deec"></i><i style="left:68px;top:679px;width:5px;height:5px;background:#b3b9c7"></i><i style="left:73px;top:674px;width:5px;height:5px;background:#d4dae8"></i><i style="left:73px;top:679px;width:5px;height:5px;background:#bcbcbc"></i><i style="left:78px;top:674px;width:5px;height:5px;background:#aaaeb4"></i><i style="left:78px;top:679px;width:5px;height:5px;background:#c7cddb"></i><i style="left:83px;top:674px;width:5px;height:5px;background:#bec2bc"></i><i style="left:83px;top:679px;width:5px;height:5px;background:#8f8f83"></i><i style="left:88px;top:674px;width:5px;height:5px;background:#b1b5bb"></i><i style="left:88px;top:679px;width:5px;height:5px;background:#a2a6a0"></i><i style="left:93px;top:674px;width:5px;height:5px;background:#e6eae4"></i><i style="left:93px;top:679px;width:5px;height:5px;background:#a1a1a1"></i><i style="left:98px;top:674px;width:5px;height:5px;background:#cac2b6"></i><i style="left:98px;top:679px;width:5px;height:5px;background:#bdbdbd"></i><i style="left:103px;top:674px;width:5px;height:5px;background:#949892"></i><i style="left:103px;top:679px;width:5px;height:5px;background:#c8cedc"></i><i style="left:28px;top:684px;width:80px;height:5px;background:#f7f7f7"></i><i style="left:107px;top:674px;width:2px;height:10px;background:#ffffff"></i><i style="left:107px;top:676px;width:1px;height:5px;background:#3a3a3a"></i><i style="left:20px;top:684px;width:3px;height:5px;background:#666666"></i><i style="left:28px;top:694px;width:5px;height:5px;background:#979797"></i><i style="left:28px;top:699px;width:5px;height:5px;background:#978b89"></i><i style="left:33px;top:694px;width:5px;height:5px;background:#95999f"></i><i style="left:33px;top:699px;width:5px;height:5px;background:#b9b9b9"></i><i style="left:38px;top:694px;width:5px;height:5px;background:#dacecc"></i><i style="left:38px;top:699px;width:5px;height:5px;background:#b2b6bc"></i><i style="left:43px;top:694px;width:5px;height:5px;background:#d3cbbf"></i><i style="left:43px;top:699px;width:5px;height:5px;background:#9197a5"></i><i style="left:48px;top:694px;width:5px;height:5px;background:#b7afa3"></i><i style="left:48px;top:699px;width:5px;height:5px;background:#d5cdc1"></i><i style="left:53px;top:694px;width:5px;height:5px;background:#8f8f8f"></i><i style="left:53px;top:699px;width:5px;height:5px;background:#babeb8"></i><i style="left:58px;top:694px;width:5px;height:5px;background:#edede1"></i><i style="left:58px;top:699px;width:5px;height:5px;background:#989eac"></i><i style="left:63px;top:694px;width:5px;height:5px;background:#9d9d91"></i><i style="left:63px;top:699px;width:5px;height:5px;background:#8e928c"></i><i style="left:68px;top:694px;width:5px;height:5px;background:#afafaf"></i><i style="left:68px;top:699px;width:5px;height:5px;background:#d0d4da"></i><i style="left:73px;top:694px;width:5px;height:5px;background:#b8b8b8"></i><i style="left:73px;top:699px;width:5px;height:5px;background:#ece0de"></i><i style="left:78px;top:694px;width:5px;height:5px;background:#e5e5d9"></i><i style="left:78px;top:699px;width:5px;height:5px;background:#979ba1"></i><i style="left:83px;top:694px;width:5px;height:5px;background:#ada19f"></i><i style="left:83px;top:699px;width:5px;height:5px;background:#c4b8b6"></i><i style="left:88px;top:694px;width:5px;height:5px;background:#a6a69a"></i><i style="left:88px;top:699px;width:5px;height:5px;background:#cfc7bb"></i><i style="left:93px;top:694px;width:5px;height:5px;background:#dbd3c7"></i><i style="left:93px;top:699px;width:5px;height:5px;background:#8e928c"></i><i style="left:98px;top:694px;width:5px;height:5px;background:#d5cdc1"></i><i style="left:98px;top:699px;width:5px;height:5px;background:#b0b6c4"></i><i style="left:103px;top:694px;width:5px;height:5px;background:#a29a8e"></i><i style="left:103px;top:699px;width:5px;height:5px;background:#a2a6ac"></i><i style="left:28px;top:704px;width:80px;height:5px;background:#f7f7f7"></i><i style="left:107px;top:694px;width:2px;height:10px;background:#ffffff"></i><i style="left:107px;top:694px;width:1px;height:5px;background:#3a3a3a"></i><i style="left:20px;top:704px;width:3px;height:5px;background:#666666"></i><i style="left:28px;top:714px;width:5px;height:5px;background:#d4d4c8"></i><i style="left:28px;top:719px;width:5px;height:5px;background:#e3e7ed"></i><i style="left:33px;top:714px;width:5px;height:5px;background:#878b91"></i><i style="left:33px;top:719px;width:5px;height:5px;background:#b0b0b0"></i><i style="left:38px;top:714px;width:5px;height:5px;background:#c2b6b4"></i><i style="left:38px;top:719px;width:5px;height:5px;background:#cbbfbd"></i><i style="left:43px;top:714px;width:5px;height:5px;background:#ddddd1"></i><i style="left:43px;top:719px;width:5px;height:5px;background:#aaaeb4"></i><i style="left:48px;top:714px;width:5px;height:5px;background:#b4bac8"></i><i style="left:48px;top:719px;width:5px;height:5px;background:#ddd5c9"></i><i style="left:53px;top:714px;width:5px;height:5px;background:#bfc3bd"></i><i style="left:53px;top:719px;width:5px;height:5px;background:#d3d9e7"></i><i style="left:58px;top:714px;width:5px;height:5px;background:#cabebc"></i><i style="left:58px;top:719px;width:5px;height:5px;background:#cbc3b7"></i><i style="left:63px;top:714px;width:5px;height:5px;background:#898989"></i><i style="left:63px;top:719px;width:5px;height:5px;background:#d8dcd6"></i><i style="left:68px;top:714px;width:5px;height:5px;background:#cec6ba"></i><i style="left:68px;top:719px;width:5px;height:5px;background:#c6c6ba"></i><i style="left:73px;top:714px;width:5px;height:5px;background:#dcdcd0"></i><i style="left:73px;top:719px;width:5px;height:5px;background:#c7c7bb"></i><i style="left:78px;top:714px;width:5px;height:5px;background:#a3a397"></i><i style="left:78px;top:719px;width:5px;height:5px;background:#c5c9c3"></i><i style="left:83px;top:714px;width:5px;height:5px;background:#949494"></i><i style="left:83px;top:719px;width:5px;height:5px;background:#8f95a3"></i><i style="left:88px;top:714px;width:5px;height:5px;background:#b6bcca"></i><i style="left:88px;top:719px;width:5px;height:5px;background:#98988c"></i><i style="left:93px;top:714px;width:5px;height:5px;background:#c9bdbb"></i><i style="left:93px;top:719px;width:5px;height:5px;background:#c4c8ce"></i><i style="left:98px;top:714px;width:5px;height:5px;background:#8c8c8c"></i><i style="left:98px;top:719px;width:5px;height:5px;background:#e4dcd0"></i><i style="left:103px;top:714px;width:5px;height:5px;background:#8d9197"></i><i style="left:103px;top:719px;width:5px;height:5px;background:#b5b5a9"></i><i style="left:28px;top:724px;width:80px;height:5px;background:#f7f7f7"></i><i style="left:107px;top:714px;width:2px;height:10px;background:#ffffff"></i><i style="left:107px;top:718px;width:1px;height:8px;background:#3a3a3a"></i><i style="left:20px;top:724px;width:3px;height:5px;background:#666666"></i><i style="left:28px;top:734px;width:5px;height:5px;background:#919191"></i><i style="left:28px;top:739px;width:5px;height:5px;background:#f1e5e3"></i><i style="left:33px;top:734px;width:5px;height:5px;background:#b3b7bd"></i><i style="left:33px;top:739px;width:5px;height:5px;background:#989898"></i><i style="left:38px;top:734px;width:5px;height:5px;background:#998d8b"></i><i style="left:38px;top:739px;width:5px;height:5px;background:#e0e4ea"></i><i style="left:43px;top:734px;width:5px;height:5px;background:#a1998d"></i><i style="left:43px;top:739px;width:5px;height:5px;background:#999d97"></i><i style="left:48px;top:734px;width:5px;height:5px;background:#b1b1a5"></i><i style="left:48px;top:739px;width:5px;height:5px;background:#989ca2"></i><i style="left:53px;top:734px;width:5px;height:5px;background:#efe7db"></i><i style="left:53px;top:739px;width:5px;height:5px;background:#959589"></i><i style="left:58px;top:734px;width:5px;height:5px;background:#bdb1af"></i><i style="left:58px;top:739px;width:5px;height:5px;background:#dfe5f3"></i><i style="left:63px;top:734px;width:5px;height:5px;background:#9399a7"></i><i style="left:63px;top:739px;width:5px;height:5px;background:#cdd3e1"></i><i style="left:68px;top:734px;width:5px;height:5px;background:#cdc5b9"></i><i style="left:68px;top:739px;width:5px;height:5px;background:#b1a5a3"></i><i style="left:73px;top:734px;width:5px;height:5px;background:#d0c8bc"></i><i style="left:73px;top:739px;width:5px;height:5px;background:#cad0de"></i><i style="left:78px;top:734px;width:5px;height:5px;background:#dfd3d1"></i><i style="left:78px;top:739px;width:5px;height:5px;background:#9da3b1"></i><i style="left:83px;top:734px;width:5px;height:5px;background:#b6b6b6"></i><i style="left:83px;top:739px;width:5px;height:5px;background:#aca498"></i><i style="left:88px;top:734px;width:5px;height:5px;background:#c6beb2"></i><i style="left:88px;top:739px;width:5px;height:5px;background:#d0d6e4"></i><i style="left:93px;top:734px;width:5px;height:5px;background:#d5dbe9"></i><i style="left:93px;top:739px;width:5px;height:5px;background:#c3bbaf"></i><i style="left:98px;top:734px;width:5px;height:5px;background:#a8a8a8"></i><i style="left:98px;top:739px;width:5px;height:5px;background:#cacaca"></i><i style="left:103px;top:734px;width:5px;height:5px;background:#deded2"></i><i style="left:103px;top:739px;width:5px;height:5px;background:#bbbbaf"></i><i style="left:28px;top:744px;width:80px;height:5px;background:#f7f7f7"></i><i style="left:107px;top:734px;width:2px;height:10px;background:#ffffff"></i><i style="left:107px;top:736px;width:1px;height:8px;background:#3a3a3a"></i><i style="left:20px;top:744px;width:3px;height:5px;background:#666666"></i><i style="left:28px;top:754px;width:5px;height:5px;background:#d3c7c5"></i><i style="left:28px;top:759px;width:5px;height:5px;background:#dfdfdf"></i><i style="left:33px;top:754px;width:5px;height:5px;background:#b1a5a3"></i><i style="left:33px;top:759px;width:5px;height:5px;background:#ddddd1"></i><i style="left:38px;top:754px;width:5px;height:5px;background:#b5b9bf"></i><i style="left:38px;top:759px;width:5px;height:5px;background:#aeb4c2"></i><i style="left:43px;top:754px;width:5px;height:5px;background:#afb5c3"></i><i style="left:43px;top:759px;width:5px;height:5px;background:#dcd4c8"></i><i style="left:48px;top:754px;width:5px;height:5px;background:#adb3c1"></i><i style="left:48px;top:759px;width:5px;height:5px;background:#e8e8e8"></i><i style="left:53px;top:754px;width:5px;height:5px;background:#cbc3b7"></i><i style="left:53px;top:759px;width:5px;height:5px;background:#a79b99"></i><i style="left:58px;top:754px;width:5px;height:5px;background:#e6e6e6"></i><i style="left:58px;top:759px;width:5px;height:5px;background:#b2b2a6"></i><i style="left:63px;top:754px;width:5px;height:5px;background:#c1c7d5"></i><i style="left:63px;top:759px;width:5px;height:5px;background:#aaaeb4"></i><i style="left:68px;top:754px;width:5px;height:5px;background:#cdd1d7"></i><i style="left:68px;top:759px;width:5px;height:5px;background:#abafb5"></i><i style="left:73px;top:754px;width:5px;height:5px;background:#83878d"></i><i style="left:73px;top:759px;width:5px;height:5px;background:#978f83"></i><i style="left:78px;top:754px;width:5px;height:5px;background:#9298a6"></i><i style="left:78px;top:759px;width:5px;height:5px;background:#d1d5db"></i><i style="left:83px;top:754px;width:5px;height:5px;background:#c0c4be"></i><i style="left:83px;top:759px;width:5px;height:5px;background:#c0c6d4"></i><i style="left:88px;top:754px;width:5px;height:5px;background:#999185"></i><i style="left:88px;top:759px;width:5px;height:5px;background:#d1c9bd"></i><i style="left:93px;top:754px;width:5px;height:5px;background:#d1d5db"></i><i style="left:93px;top:759px;width:5px;height:5px;background:#8c8c8c"></i><i style="left:98px;top:754px;width:5px;height:5px;background:#8d8d8d"></i><i style="left:98px;top:759px;width:5px;height:5px;background:#c7cddb"></i><i style="left:103px;top:754px;width:5px;height:5px;background:#adadad"></i><i style="left:103px;top:759px;width:5px;height:5px;background:#c1c7d5"></i><i style="left:28px;top:764px;width:80px;height:5px;background:#f7f7f7"></i><i style="left:107px;top:754px;width:2px;height:10px;background:#ffffff"></i><i style="left:107px;top:758px;width:1px;height:5px;background:#3a3a3a"></i><i style="left:20px;top:764px;width:3px;height:5px;background:#666666"></i><i style="left:28px;top:774px;width:5px;height:5px;background:#c5b9b7"></i><i style="left:28px;top:779px;width:5px;height:5px;background:#b7aba9"></i><i style="left:33px;top:774px;width:5px;height:5px;background:#a49c90"></i><i style="left:33px;top:779px;width:5px;height:5px;background:#bfb3b1"></i><i style="left:38px;top:774px;width:5px;height:5px;background:#cfc7bb"></i><i style="left:38px;top:779px;width:5px;height:5px;background:#989898"></i><i style="left:43px;top:774px;width:5px;height:5px;background:#a2a6ac"></i><i style="left:43px;top:779px;width:5px;height:5px;background:#9ca09a"></i><i style="left:48px;top:774px;width:5px;height:5px;background:#939393"></i><i style="left:48px;top:779px;width:5px;height:5px;background:#e4dcd0"></i><i style="left:53px;top:774px;width:5px;height:5px;background:#e2e2d6"></i><i style="left:53px;top:779px;width:5px;height:5px;background:#abafa9"></i><i style="left:58px;top:774px;width:5px;height:5px;background:#a8a8a8"></i><i style="left:58px;top:779px;width:5px;height:5px;background:#8a8e94"></i><i style="left:63px;top:774px;width:5px;height:5px;background:#c6ccda"></i><i style="left:63px;top:779px;width:5px;height:5px;background:#cfd3d9"></i><i style="left:68px;top:774px;width:5px;height:5px;background:#d3d7d1"></i><i style="left:68px;top:779px;width:5px;height:5px;background:#ded2d0"></i><i style="left:73px;top:774px;width:5px;height:5px;background:#e6eae4"></i><i style="left:73px;top:779px;width:5px;height:5px;background:#b2aa9e"></i><i style="left:78px;top:774px;width:5px;height:5px;background:#878787"></i><i style="left:78px;top:779px;width:5px;height:5px;background:#988c8a"></i><i style="left:83px;top:774px;width:5px;height:5px;background:#8c908a"></i><i style="left:83px;top:779px;width:5px;height:5px;background:#aaa296"></i><i style="left:88px;top:774px;width:5px;height:5px;background:#9b9b9b"></i><i style="left:88px;top:779px;width:5px;height:5px;background:#949494"></i><i style="left:93px;top:774px;width:5px;height:5px;background:#dfd3d1"></i><i style="left:93px;top:779px;width:5px;height:5px;background:#e7dfd3"></i><i style="left:98px;top:774px;width:5px;height:5px;background:#9b9f99"></i><i style="left:98px;top:779px;width:5px;height:5px;background:#aa9e9c"></i><i style="left:103px;top:774px;width:5px;height:5px;background:#d0d4da"></i><i style="left:103px;top:779px;width:5px;height:5px;background:#c3c7cd"></i><i style="left:28px;top:784px;width:80px;height:5px;background:#f7f7f7"></i><i style="left:107px;top:774px;width:2px;height:10px;background:#ffffff"></i><i style="left:107px;top:778px;width:1px;height:6px;background:#3a3a3a"></i><i style="left:20px;top:784px;width:3px;height:5px;background:#666666"></i><i style="left:28px;top:794px;width:5px;height:5px;background:#e1d9cd"></i><i style="left:28px;top:799px;width:5px;height:5px;background:#c0c6d4"></i><i style="left:33px;top:794px;width:5px;height:5px;background:#878d9b"></i><i style="left:33px;top:799px;width:5px;height:5px;background:#d7d7d7"></i><i style="left:38px;top:794px;width:5px;height:5px;background:#e9e9dd"></i><i style="left:38px;top:799px;width:5px;height:5px;background:#c0c4ca"></i><i style="left:43px;top:794px;width:5px;height:5px;background:#cbcbcb"></i><i style="left:43px;top:799px;width:5px;height:5px;background:#bdbdb1"></i><i style="left:48px;top:794px;width:5px;height:5px;background:#babec4"></i><i style="left:48px;top:799px;width:5px;height:5px;background:#c2c2c2"></i><i style="left:53px;top:794px;width:5px;height:5px;background:#e1e5eb"></i><i style="left:53px;top:799px;width:5px;height:5px;background:#ccc4b8"></i><i style="left:58px;top:794px;width:5px;height:5px;background:#a3a3a3"></i><i style="left:58px;top:799px;width:5px;height:5px;background:#b4aca0"></i><i style="left:63px;top:794px;width:5px;height:5px;background:#d9d9d9"></i><i style="left:63px;top:799px;width:5px;height:5px;background:#8e94a2"></i><i style="left:68px;top:794px;width:5px;height:5px;background:#e2e6ec"></i><i style="left:68px;top:799px;width:5px;height:5px;background:#a4a8ae"></i><i style="left:73px;top:794px;width:5px;height:5px;background:#858b99"></i><i style="left:73px;top:799px;width:5px;height:5px;background:#e2d6d4"></i><i style="left:78px;top:794px;width:5px;height:5px;background:#dfe3dd"></i><i style="left:78px;top:799px;width:5px;height:5px;background:#e4e4d8"></i><i style="left:83px;top:794px;width:5px;height:5px;background:#c1c7d5"></i><i style="left:83px;top:799px;width:5px;height:5px;background:#a8acb2"></i><i style="left:88px;top:794px;width:5px;height:5px;background:#a2a2a2"></i><i style="left:88px;top:799px;width:5px;height:5px;background:#c7c7c7"></i><i style="left:93px;top:794px;width:5px;height:5px;background:#949aa8"></i><i style="left:93px;top:799px;width:5px;height:5px;background:#abab9f"></i><i style="left:98px;top:794px;width:5px;height:5px;background:#f2eade"></i><i style="left:98px;top:799px;width:5px;height:5px;background:#979ba1"></i><i style="left:103px;top:794px;width:5px;height:5px;background:#bcb4a8"></i><i style="left:103px;top:799px;width:5px;height:5px;background:#b0b6c4"></i><i style="left:28px;top:804px;width:80px;height:5px;background:#f7f7f7"></i><i style="left:107px;top:794px;width:2px;height:10px;background:#ffffff"></i><i style="left:107px;top:798px;width:1px;height:5px;background:#3a3a3a"></i><i style="left:20px;top:804px;width:3px;height:5px;background:#666666"></i><i style="left:28px;top:814px;width:5px;height:5px;background:#bdbdb1"></i><i style="left:28px;top:819px;width:5px;height:5px;background:#d3d7dd"></i><i style="left:33px;top:814px;width:5px;height:5px;background:#e2e2d6"></i><i style="left:33px;top:819px;width:5px;height:5px;background:#cdd1cb"></i><i style="left:38px;top:814px;width:5px;height:5px;background:#c9c9bd"></i><i style="left:38px;top:819px;width:5px;height:5px;background:#c6cad0"></i><i style="left:43px;top:814px;width:5px;height:5px;background:#8d8d81"></i><i style="left:43px;top:819px;width:5px;height:5px;background:#8c908a"></i><i style="left:48px;top:814px;width:5px;height:5px;background:#efe7db"></i><i style="left:48px;top:819px;width:5px;height:5px;background:#c8cedc"></i><i style="left:53px;top:814px;width:5px;height:5px;background:#a4a8a2"></i><i style="left:53px;top:819px;width:5px;height:5px;background:#e0d4d2"></i><i style="left:58px;top:814px;width:5px;height:5px;background:#9a8e8c"></i><i style="left:58px;top:819px;width:5px;height:5px;background:#a8a094"></i><i style="left:63px;top:814px;width:5px;height:5px;background:#8b8b8b"></i><i style="left:63px;top:819px;width:5px;height:5px;background:#959595"></i><i style="left:68px;top:814px;width:5px;height:5px;background:#e2dace"></i><i style="left:68px;top:819px;width:5px;height:5px;background:#bfb7ab"></i><i style="left:73px;top:814px;width:5px;height:5px;background:#e0e0e0"></i><i style="left:73px;top:819px;width:5px;height:5px;background:#8a8a8a"></i><i style="left:78px;top:814px;width:5px;height:5px;background:#94989e"></i><i style="left:78px;top:819px;width:5px;height:5px;background:#d5d9df"></i><i style="left:83px;top:814px;width:5px;height:5px;background:#888c92"></i><i style="left:83px;top:819px;width:5px;height:5px;background:#8b8f95"></i><i style="left:88px;top:814px;width:5px;height:5px;background:#8c8c8c"></i><i style="left:88px;top:819px;width:5px;height:5px;background:#d8d8cc"></i><i style="left:93px;top:814px;width:5px;height:5px;background:#c1b9ad"></i><i style="left:93px;top:819px;width:5px;height:5px;background:#c7cbd1"></i><i style="left:98px;top:814px;width:5px;height:5px;background:#959589"></i><i style="left:98px;top:819px;width:5px;height:5px;background:#e3e7ed"></i><i style="left:103px;top:814px;width:5px;height:5px;background:#b8b8b8"></i><i style="left:103px;top:819px;width:5px;height:5px;background:#b2aa9e"></i><i style="left:28px;top:824px;width:80px;height:5px;background:#f7f7f7"></i><i style="left:107px;top:814px;width:2px;height:10px;background:#ffffff"></i><i style="left:107px;top:814px;width:1px;height:5px;background:#3a3a3a"></i><i style="left:20px;top:824px;width:3px;height:5px;background:#666666"></i><i style="left:28px;top:834px;width:5px;height:5px;background:#8b8b8b"></i><i style="left:28px;top:839px;width:5px;height:5px;background:#e3e7ed"></i><i style="left:33px;top:834px;width:5px;height:5px;background:#98988c"></i><i style="left:33px;top:839px;width:5px;height:5px;background:#e3e7ed"></i><i style="left:38px;top:834px;width:5px;height:5px;background:#cfd5e3"></i><i style="left:38px;top:839px;width:5px;height:5px;background:#c4c4c4"></i><i style="left:43px;top:834px;width:5px;height:5px;background:#979797"></i><i style="left:43px;top:839px;width:5px;height:5px;background:#e3e7ed"></i><i style="left:48px;top:834px;width:5px;height:5px;background:#999fad"></i><i style="left:48px;top:839px;width:5px;height:5px;background:#a7adbb"></i><i style="left:53px;top:834px;width:5px;height:5px;background:#b5bbc9"></i><i style="left:53px;top:839px;width:5px;height:5px;background:#818795"></i><i style="left:58px;top:834px;width:5px;height:5px;background:#9fa5b3"></i><i style="left:58px;top:839px;width:5px;height:5px;background:#898d93"></i><i style="left:63px;top:834px;width:5px;height:5px;background:#e0e6f4"></i><i style="left:63px;top:839px;width:5px;height:5px;background:#b6b6aa"></i><i style="left:68px;top:834px;width:5px;height:5px;background:#ded2d0"></i><i style="left:68px;top:839px;width:5px;height:5px;background:#c9c9bd"></i><i style="left:73px;top:834px;width:5px;height:5px;background:#b5a9a7"></i><i style="left:73px;top:839px;width:5px;height:5px;background:#e6e6e6"></i><i style="left:78px;top:834px;width:5px;height:5px;background:#bbbbbb"></i><i style="left:78px;top:839px;width:5px;height:5px;background:#c8bcba"></i><i style="left:83px;top:834px;width:5px;height:5px;background:#8b919f"></i><i style="left:83px;top:839px;width:5px;height:5px;background:#bfc3c9"></i><i style="left:88px;top:834px;width:5px;height:5px;background:#978b89"></i><i style="left:88px;top:839px;width:5px;height:5px;background:#dbd3c7"></i><i style="left:93px;top:834px;width:5px;height:5px;background:#e8e8dc"></i><i style="left:93px;top:839px;width:5px;height:5px;background:#9c908e"></i><i style="left:98px;top:834px;width:5px;height:5px;background:#b7afa3"></i><i style="left:98px;top:839px;width:5px;height:5px;background:#bebebe"></i><i style="left:103px;top:834px;width:5px;height:5px;background:#d6cec2"></i><i style="left:103px;top:839px;width:5px;height:5px;background:#b1b1a5"></i><i style="left:28px;top:844px;width:80px;height:5px;background:#f7f7f7"></i><i style="left:107px;top:834px;width:2px;height:10px;background:#ffffff"></i><i style="left:107px;top:834px;width:1px;height:5px;background:#3a3a3a"></i><i style="left:20px;top:844px;width:3px;height:5px;background:#666666"></i><i style="left:28px;top:854px;width:5px;height:5px;background:#b5b9b3"></i><i style="left:28px;top:859px;width:5px;height:5px;background:#959993"></i><i style="left:33px;top:854px;width:5px;height:5px;background:#e5e5d9"></i><i style="left:33px;top:859px;width:5px;height:5px;background:#a0a49e"></i><i style="left:38px;top:854px;width:5px;height:5px;background:#cad0de"></i><i style="left:38px;top:859px;width:5px;height:5px;background:#c0c6d4"></i><i style="left:43px;top:854px;width:5px;height:5px;background:#dcd4c8"></i><i style="left:43px;top:859px;width:5px;height:5px;background:#b1b1a5"></i><i style="left:48px;top:854px;width:5px;height:5px;background:#9ea2a8"></i><i style="left:48px;top:859px;width:5px;height:5px;background:#a6aaa4"></i><i style="left:53px;top:854px;width:5px;height:5px;background:#9c9c9c"></i><i style="left:53px;top:859px;width:5px;height:5px;background:#deded2"></i><i style="left:58px;top:854px;width:5px;height:5px;background:#939791"></i><i style="left:58px;top:859px;width:5px;height:5px;background:#eadedc"></i><i style="left:63px;top:854px;width:5px;height:5px;background:#90949a"></i><i style="left:63px;top:859px;width:5px;height:5px;background:#a8aebc"></i><i style="left:68px;top:854px;width:5px;height:5px;background:#959993"></i><i style="left:68px;top:859px;width:5px;height:5px;background:#b5b9bf"></i><i style="left:73px;top:854px;width:5px;height:5px;background:#949892"></i><i style="left:73px;top:859px;width:5px;height:5px;background:#d9d9d9"></i><i style="left:78px;top:854px;width:5px;height:5px;background:#c2baae"></i><i style="left:78px;top:859px;width:5px;height:5px;background:#a5abb9"></i><i style="left:83px;top:854px;width:5px;height:5px;background:#c7bbb9"></i><i style="left:83px;top:859px;width:5px;height:5px;background:#d3cbbf"></i><i style="left:88px;top:854px;width:5px;height:5px;background:#b3b7bd"></i><i style="left:88px;top:859px;width:5px;height:5px;background:#a6aaa4"></i><i style="left:93px;top:854px;width:5px;height:5px;background:#a19593"></i><i style="left:93px;top:859px;width:5px;height:5px;background:#d9d9cd"></i><i style="left:98px;top:854px;width:5px;height:5px;background:#e5e5d9"></i><i style="left:98px;top:859px;width:5px;height:5px;background:#d0d4da"></i><i style="left:103px;top:854px;width:5px;height:5px;background:#838997"></i><i style="left:103px;top:859px;width:5px;height:5px;background:#c9cfdd"></i><i style="left:28px;top:864px;width:80px;height:5px;background:#f7f7f7"></i><i style="left:107px;top:854px;width:2px;height:10px;background:#ffffff"></i><i style="left:107px;top:858px;width:1px;height:5px;background:#3a3a3a"></i><i style="left:20px;top:864px;width:3px;height:5px;background:#666666"></i><i style="left:28px;top:874px;width:5px;height:5px;background:#bcc0c6"></i><i style="left:28px;top:879px;width:5px;height:5px;background:#c9cdd3"></i><i style="left:33px;top:874px;width:5px;height:5px;background:#bcb4a8"></i><i style="left:33px;top:879px;width:5px;height:5px;background:#c4c8c2"></i><i style="left:38px;top:874px;width:5px;height:5px;background:#e5e5d9"></i><i style="left:38px;top:879px;width:5px;height:5px;background:#b1a5a3"></i><i style="left:43px;top:874px;width:5px;height:5px;background:#b0a89c"></i><i style="left:43px;top:879px;width:5px;height:5px;background:#b3b7b1"></i><i style="left:48px;top:874px;width:5px;height:5px;background:#d5d9df"></i><i style="left:48px;top:879px;width:5px;height:5px;background:#afa3a1"></i><i style="left:53px;top:874px;width:5px;height:5px;background:#979dab"></i><i style="left:53px;top:879px;width:5px;height:5px;background:#b3b3a7"></i><i style="left:58px;top:874px;width:5px;height:5px;background:#e7e7db"></i><i style="left:58px;top:879px;width:5px;height:5px;background:#e2dace"></i><i style="left:63px;top:874px;width:5px;height:5px;background:#efe7db"></i><i style="left:63px;top:879px;width:5px;height:5px;background:#a2a6ac"></i><i style="left:68px;top:874px;width:5px;height:5px;background:#baaeac"></i><i style="left:68px;top:879px;width:5px;height:5px;background:#c1c7d5"></i><i style="left:73px;top:874px;width:5px;height:5px;background:#a79f93"></i><i style="left:73px;top:879px;width:5px;height:5px;background:#bcb4a8"></i><i style="left:78px;top:874px;width:5px;height:5px;background:#a4a8ae"></i><i style="left:78px;top:879px;width:5px;height:5px;background:#a0988c"></i><i style="left:83px;top:874px;width:5px;height:5px;background:#dbdbdb"></i><i style="left:83px;top:879px;width:5px;height:5px;background:#a2a6a0"></i><i style="left:88px;top:874px;width:5px;height:5px;background:#a69e92"></i><i style="left:88px;top:879px;width:5px;height:5px;background:#a9adb3"></i><i style="left:93px;top:874px;width:5px;height:5px;background:#afb3ad"></i><i style="left:93px;top:879px;width:5px;height:5px;background:#b6aea2"></i><i style="left:98px;top:874px;width:5px;height:5px;background:#90949a"></i><i style="left:98px;top:879px;width:5px;height:5px;background:#8c92a0"></i><i style="left:103px;top:874px;width:5px;height:5px;background:#a3a7a1"></i><i style="left:103px;top:879px;width:5px;height:5px;background:#c2c2c2"></i><i style="left:23px;top:882px;width:5px;height:3px;background:#cacec8"></i><i style="left:28px;top:882px;width:5px;height:3px;background:#dfe3e9"></i><i style="left:33px;top:882px;width:5px;height:3px;background:#e0d4d2"></i><i style="left:38px;top:882px;width:5px;height:3px;background:#e8eefc"></i><i style="left:43px;top:882px;width:5px;height:3px;background:#e5e5e5"></i><i style="left:48px;top:882px;width:5px;height:3px;background:#c9cfdd"></i><i style="left:53px;top:882px;width:5px;height:3px;background:#eaeef4"></i><i style="left:58px;top:882px;width:5px;height:3px;background:#e1e1e1"></i><i style="left:63px;top:882px;width:5px;height:3px;background:#ddddd1"></i><i style="left:68px;top:882px;width:5px;height:3px;background:#dfe3e9"></i><i style="left:73px;top:882px;width:5px;height:3px;background:#f6eae8"></i><i style="left:78px;top:882px;width:5px;height:3px;background:#e8e8dc"></i><i style="left:83px;top:882px;width:5px;height:3px;background:#d2d6dc"></i><i style="left:88px;top:882px;width:5px;height:3px;background:#f3f3e7"></i><i style="left:93px;top:882px;width:5px;height:3px;background:#d2d6dc"></i><i style="left:98px;top:882px;width:5px;height:3px;background:#cfd3d9"></i><i style="left:103px;top:882px;width:5px;height:3px;background:#d1d5cf"></i><i style="left:108px;top:882px;width:5px;height:3px;background:#dbe1ef"></i><i style="left:113px;top:882px;width:5px;height:3px;background:#d4d8de"></i><i style="left:118px;top:882px;width:5px;height:3px;background:#d0d4ce"></i><i style="left:23px;top:885px;width:101px;height:4px;background:#f4f4f4"></i><i style="left:23px;top:889px;width:5px;height:5px;background:#c9c9c4"></i><i style="left:23px;top:894px;width:5px;height:5px;background:#cbcbbf"></i><i style="left:23px;top:899px;width:5px;height:5px;background:#c6cad0"></i><i style="left:28px;top:889px;width:5px;height:5px;background:#e0e6f4"></i><i style="left:28px;top:894px;width:5px;height:5px;background:#ced2cc"></i><i style="left:28px;top:899px;width:5px;height:5px;background:#d0d0d0"></i><i style="left:33px;top:889px;width:5px;height:5px;background:#fff6f4"></i><i style="left:33px;top:894px;width:5px;height:5px;background:#e8ecf2"></i><i style="left:33px;top:899px;width:5px;height:5px;background:#a9adb3"></i><i style="left:38px;top:889px;width:5px;height:5px;background:#f8f8ec"></i><i style="left:38px;top:894px;width:5px;height:5px;background:#999d97"></i><i style="left:38px;top:899px;width:5px;height:5px;background:#d4d4d4"></i><i style="left:43px;top:889px;width:5px;height:5px;background:#d8deec"></i><i style="left:43px;top:894px;width:5px;height:5px;background:#e7dfd3"></i><i style="left:43px;top:899px;width:5px;height:5px;background:#a6aab0"></i><i style="left:48px;top:889px;width:5px;height:5px;background:#f4e8e6"></i><i style="left:48px;top:894px;width:5px;height:5px;background:#c2c2c2"></i><i style="left:48px;top:899px;width:5px;height:5px;background:#e1e5df"></i><i style="left:53px;top:889px;width:5px;height:5px;background:#e7ebf1"></i><i style="left:53px;top:894px;width:5px;height:5px;background:#dcd0ce"></i><i style="left:53px;top:899px;width:5px;height:5px;background:#94989e"></i><i style="left:58px;top:889px;width:5px;height:5px;background:#fff3f1"></i><i style="left:58px;top:894px;width:5px;height:5px;background:#c3c7c1"></i><i style="left:58px;top:899px;width:5px;height:5px;background:#dcd4c8"></i><i style="left:63px;top:889px;width:5px;height:5px;background:#ebefe9"></i><i style="left:63px;top:894px;width:5px;height:5px;background:#ddddd1"></i><i style="left:63px;top:899px;width:5px;height:5px;background:#a1a5ab"></i><i style="left:68px;top:889px;width:5px;height:5px;background:#f0f4fa"></i><i style="left:68px;top:894px;width:5px;height:5px;background:#959ba9"></i><i style="left:68px;top:899px;width:5px;height:5px;background:#bbbfb9"></i><i style="left:73px;top:889px;width:5px;height:5px;background:#f7f7f7"></i><i style="left:73px;top:894px;width:5px;height:5px;background:#979797"></i><i style="left:73px;top:899px;width:5px;height:5px;background:#cdd1cb"></i><i style="left:78px;top:889px;width:5px;height:5px;background:#fef2f0"></i><i style="left:78px;top:894px;width:5px;height:5px;background:#b7b7b7"></i><i style="left:78px;top:899px;width:5px;height:5px;background:#aab0be"></i><i style="left:83px;top:889px;width:5px;height:5px;background:#fff5f3"></i><i style="left:83px;top:894px;width:5px;height:5px;background:#b8b8ac"></i><i style="left:83px;top:899px;width:5px;height:5px;background:#cacec8"></i><i style="left:88px;top:889px;width:5px;height:5px;background:#f7efe3"></i><i style="left:88px;top:894px;width:5px;height:5px;background:#acaca0"></i><i style="left:88px;top:899px;width:5px;height:5px;background:#a4a498"></i><i style="left:93px;top:889px;width:5px;height:5px;background:#ecf0ea"></i><i style="left:93px;top:894px;width:5px;height:5px;background:#f2e6e4"></i><i style="left:93px;top:899px;width:5px;height:5px;background:#b8b8ac"></i><i style="left:98px;top:889px;width:5px;height:5px;background:#dfe5f3"></i><i style="left:98px;top:894px;width:5px;height:5px;background:#e7ebf1"></i><i style="left:98px;top:899px;width:5px;height:5px;background:#ccd0ca"></i><i style="left:103px;top:889px;width:5px;height:5px;background:#f6f6ea"></i><i style="left:103px;top:894px;width:5px;height:5px;background:#d8dce2"></i><i style="left:103px;top:899px;width:5px;height:5px;background:#acaca0"></i><i style="left:108px;top:889px;width:5px;height:5px;background:#f4faff"></i><i style="left:108px;top:894px;width:5px;height:5px;background:#abb1bf"></i><i style="left:108px;top:899px;width:5px;height:5px;background:#f2f6f0"></i><i style="left:113px;top:889px;width:5px;height:5px;background:#f0f4ee"></i><i style="left:113px;top:894px;width:5px;height:5px;background:#f8f0e4"></i><i style="left:113px;top:899px;width:5px;height:5px;background:#d3d3d3"></i><i style="left:118px;top:889px;width:5px;height:5px;background:#e7edfb"></i><i style="left:118px;top:894px;width:5px;height:5px;background:#b1b5bb"></i><i style="left:118px;top:899px;width:5px;height:5px;background:#b4bac8"></i><i style="left:23px;top:904px;width:101px;height:5px;background:#f4f4f4"></i><i style="left:20px;top:904px;width:3px;height:5px;background:#666666"></i><i style="left:23px;top:909px;width:5px;height:5px;background:#c9c9c4"></i><i style="left:23px;top:914px;width:5px;height:5px;background:#cfd3cd"></i><i style="left:23px;top:919px;width:5px;height:5px;background:#d5c9c7"></i><i style="left:28px;top:909px;width:5px;height:5px;background:#dfe3e9"></i><i style="left:28px;top:914px;width:5px;height:5px;background:#d0c8bc"></i><i style="left:28px;top:919px;width:5px;height:5px;background:#c2c2b6"></i><i style="left:33px;top:909px;width:5px;height:5px;background:#f6f6f6"></i><i style="left:33px;top:914px;width:5px;height:5px;background:#a6a69a"></i><i style="left:33px;top:919px;width:5px;height:5px;background:#d6dcea"></i><i style="left:38px;top:909px;width:5px;height:5px;background:#f0e4e2"></i><i style="left:38px;top:914px;width:5px;height:5px;background:#bec2c8"></i><i style="left:38px;top:919px;width:5px;height:5px;background:#e0e0e0"></i><i style="left:43px;top:909px;width:5px;height:5px;background:#eae2d6"></i><i style="left:43px;top:914px;width:5px;height:5px;background:#9b9fa5"></i><i style="left:43px;top:919px;width:5px;height:5px;background:#b3b9c7"></i><i style="left:48px;top:909px;width:5px;height:5px;background:#eee2e0"></i><i style="left:48px;top:914px;width:5px;height:5px;background:#aeaea2"></i><i style="left:48px;top:919px;width:5px;height:5px;background:#bfb7ab"></i><i style="left:53px;top:909px;width:5px;height:5px;background:#f2f8ff"></i><i style="left:53px;top:914px;width:5px;height:5px;background:#b5ada1"></i><i style="left:53px;top:919px;width:5px;height:5px;background:#cfcfc3"></i><i style="left:58px;top:909px;width:5px;height:5px;background:#f2e6e4"></i><i style="left:58px;top:914px;width:5px;height:5px;background:#f8ecea"></i><i style="left:58px;top:919px;width:5px;height:5px;background:#9da1a7"></i><i style="left:63px;top:909px;width:5px;height:5px;background:#fdf5e9"></i><i style="left:63px;top:914px;width:5px;height:5px;background:#d1d5db"></i><i style="left:63px;top:919px;width:5px;height:5px;background:#bbafad"></i><i style="left:68px;top:909px;width:5px;height:5px;background:#dfe3e9"></i><i style="left:68px;top:914px;width:5px;height:5px;background:#caced4"></i><i style="left:68px;top:919px;width:5px;height:5px;background:#aea2a0"></i><i style="left:73px;top:909px;width:5px;height:5px;background:#dde3f1"></i><i style="left:73px;top:914px;width:5px;height:5px;background:#d7cfc3"></i><i style="left:73px;top:919px;width:5px;height:5px;background:#a9ada7"></i><i style="left:78px;top:909px;width:5px;height:5px;background:#fffbf9"></i><i style="left:78px;top:914px;width:5px;height:5px;background:#9fa39d"></i><i style="left:78px;top:919px;width:5px;height:5px;background:#ddd5c9"></i><i style="left:83px;top:909px;width:5px;height:5px;background:#fffff5"></i><i style="left:83px;top:914px;width:5px;height:5px;background:#e1d9cd"></i><i style="left:83px;top:919px;width:5px;height:5px;background:#e5d9d7"></i><i style="left:88px;top:909px;width:5px;height:5px;background:#eae2d6"></i><i style="left:88px;top:914px;width:5px;height:5px;background:#c1c5bf"></i><i style="left:88px;top:919px;width:5px;height:5px;background:#f9edeb"></i><i style="left:93px;top:909px;width:5px;height:5px;background:#f9fdff"></i><i style="left:93px;top:914px;width:5px;height:5px;background:#c1c1b5"></i><i style="left:93px;top:919px;width:5px;height:5px;background:#c9cfdd"></i><i style="left:98px;top:909px;width:5px;height:5px;background:#fbfff9"></i><i style="left:98px;top:914px;width:5px;height:5px;background:#ececec"></i><i style="left:98px;top:919px;width:5px;height:5px;background:#a9adb3"></i><i style="left:103px;top:909px;width:5px;height:5px;background:#f1f5fb"></i><i style="left:103px;top:914px;width:5px;height:5px;background:#e8e8e8"></i><i style="left:103px;top:919px;width:5px;height:5px;background:#a29694"></i><i style="left:108px;top:909px;width:5px;height:5px;background:#dce0e6"></i><i style="left:108px;top:914px;width:5px;height:5px;background:#c6c6ba"></i><i style="left:108px;top:919px;width:5px;height:5px;background:#aca09e"></i><i style="left:113px;top:909px;width:5px;height:5px;background:#fefffc"></i><i style="left:113px;top:914px;width:5px;height:5px;background:#a8a8a8"></i><i style="left:113px;top:919px;width:5px;height:5px;background:#adb1b7"></i><i style="left:118px;top:909px;width:5px;height:5px;background:#f4f8fe"></i><i style="left:118px;top:914px;width:5px;height:5px;background:#9ea4b2"></i><i style="left:118px;top:919px;width:5px;height:5px;background:#a8a89c"></i><i style="left:23px;top:924px;width:101px;height:5px;background:#f4f4f4"></i><i style="left:20px;top:924px;width:3px;height:5px;background:#666666"></i><i style="left:23px;top:929px;width:5px;height:5px;background:#c9c9c4"></i><i style="left:23px;top:934px;width:5px;height:5px;background:#cbd1df"></i><i style="left:23px;top:939px;width:5px;height:5px;background:#cacec8"></i><i style="left:28px;top:929px;width:5px;height:5px;background:#fffdfb"></i><i style="left:28px;top:934px;width:5px;height:5px;background:#a8aebc"></i><i style="left:28px;top:939px;width:5px;height:5px;background:#c5cbd9"></i><i style="left:33px;top:929px;width:5px;height:5px;background:#f1f7ff"></i><i style="left:33px;top:934px;width:5px;height:5px;background:#dcdcdc"></i><i style="left:33px;top:939px;width:5px;height:5px;background:#b3b9c7"></i><i style="left:38px;top:929px;width:5px;height:5px;background:#fafaee"></i><i style="left:38px;top:934px;width:5px;height:5px;background:#d7dbd5"></i><i style="left:38px;top:939px;width:5px;height:5px;background:#cabebc"></i><i style="left:43px;top:929px;width:5px;height:5px;background:#f5f5e9"></i><i style="left:43px;top:934px;width:5px;height:5px;background:#ced4e2"></i><i style="left:43px;top:939px;width:5px;height:5px;background:#acb0b6"></i><i style="left:48px;top:929px;width:5px;height:5px;background:#fffff7"></i><i style="left:48px;top:934px;width:5px;height:5px;background:#9da3b1"></i><i style="left:48px;top:939px;width:5px;height:5px;background:#a6acba"></i><i style="left:53px;top:929px;width:5px;height:5px;background:#fdf5e9"></i><i style="left:53px;top:934px;width:5px;height:5px;background:#dde1e7"></i><i style="left:53px;top:939px;width:5px;height:5px;background:#a7a79b"></i><i style="left:58px;top:929px;width:5px;height:5px;background:#e2e6e0"></i><i style="left:58px;top:934px;width:5px;height:5px;background:#dee2dc"></i><i style="left:58px;top:939px;width:5px;height:5px;background:#e5d9d7"></i><i style="left:63px;top:929px;width:5px;height:5px;background:#e3e7e1"></i><i style="left:63px;top:934px;width:5px;height:5px;background:#bcbcbc"></i><i style="left:63px;top:939px;width:5px;height:5px;background:#969696"></i><i style="left:68px;top:929px;width:5px;height:5px;background:#f0f0e4"></i><i style="left:68px;top:934px;width:5px;height:5px;background:#dcd0ce"></i><i style="left:68px;top:939px;width:5px;height:5px;background:#eaeaea"></i><i style="left:73px;top:929px;width:5px;height:5px;background:#fffcfa"></i><i style="left:73px;top:934px;width:5px;height:5px;background:#e6eae4"></i><i style="left:73px;top:939px;width:5px;height:5px;background:#f0e8dc"></i><i style="left:78px;top:929px;width:5px;height:5px;background:#efe7db"></i><i style="left:78px;top:934px;width:5px;height:5px;background:#979ba1"></i><i style="left:78px;top:939px;width:5px;height:5px;background:#e9ede7"></i><i style="left:83px;top:929px;width:5px;height:5px;background:#e9e9e9"></i><i style="left:83px;top:934px;width:5px;height:5px;background:#f6eee2"></i><i style="left:83px;top:939px;width:5px;height:5px;background:#9ca09a"></i><i style="left:88px;top:929px;width:5px;height:5px;background:#e0e4ea"></i><i style="left:88px;top:934px;width:5px;height:5px;background:#8f95a3"></i><i style="left:88px;top:939px;width:5px;height:5px;background:#adada1"></i><i style="left:93px;top:929px;width:5px;height:5px;background:#fbefed"></i><i style="left:93px;top:934px;width:5px;height:5px;background:#e8eefc"></i><i style="left:93px;top:939px;width:5px;height:5px;background:#c8c0b4"></i><i style="left:98px;top:929px;width:5px;height:5px;background:#f8f8f8"></i><i style="left:98px;top:934px;width:5px;height:5px;background:#bebebe"></i><i style="left:98px;top:939px;width:5px;height:5px;background:#d7cbc9"></i><i style="left:103px;top:929px;width:5px;height:5px;background:#e3e7e1"></i><i style="left:103px;top:934px;width:5px;height:5px;background:#e8dcda"></i><i style="left:103px;top:939px;width:5px;height:5px;background:#a1a195"></i><i style="left:108px;top:929px;width:5px;height:5px;background:#ebebdf"></i><i style="left:108px;top:934px;width:5px;height:5px;background:#d5c9c7"></i><i style="left:108px;top:939px;width:5px;height:5px;background:#f1f5ef"></i><i style="left:113px;top:929px;width:5px;height:5px;background:#fafafa"></i><i style="left:113px;top:934px;width:5px;height:5px;background:#93979d"></i><i style="left:113px;top:939px;width:5px;height:5px;background:#d1c5c3"></i><i style="left:118px;top:929px;width:5px;height:5px;background:#e9ede7"></i><i style="left:118px;top:934px;width:5px;height:5px;background:#d4c8c6"></i><i style="left:118px;top:939px;width:5px;height:5px;background:#a3a3a3"></i><i style="left:23px;top:944px;width:101px;height:5px;background:#f4f4f4"></i><i style="left:20px;top:944px;width:3px;height:5px;background:#666666"></i><i style="left:23px;top:949px;width:5px;height:5px;background:#c9c9c4"></i><i style="left:23px;top:954px;width:5px;height:5px;background:#d4d8d2"></i><i style="left:23px;top:959px;width:5px;height:5px;background:#d0c8bc"></i><i style="left:28px;top:949px;width:5px;height:5px;background:#e0e4de"></i><i style="left:28px;top:954px;width:5px;height:5px;background:#969696"></i><i style="left:28px;top:959px;width:5px;height:5px;background:#e9edf3"></i><i style="left:33px;top:949px;width:5px;height:5px;background:#ebebdf"></i><i style="left:33px;top:954px;width:5px;height:5px;background:#ada599"></i><i style="left:33px;top:959px;width:5px;height:5px;background:#b1a99d"></i><i style="left:38px;top:949px;width:5px;height:5px;background:#fcfcfc"></i><i style="left:38px;top:954px;width:5px;height:5px;background:#b5b9bf"></i><i style="left:38px;top:959px;width:5px;height:5px;background:#eae2d6"></i><i style="left:43px;top:949px;width:5px;height:5px;background:#f6faff"></i><i style="left:43px;top:954px;width:5px;height:5px;background:#adadad"></i><i style="left:43px;top:959px;width:5px;height:5px;background:#cacabe"></i><i style="left:48px;top:949px;width:5px;height:5px;background:#e3e7ed"></i><i style="left:48px;top:954px;width:5px;height:5px;background:#989eac"></i><i style="left:48px;top:959px;width:5px;height:5px;background:#f0e4e2"></i><i style="left:53px;top:949px;width:5px;height:5px;background:#fffffd"></i><i style="left:53px;top:954px;width:5px;height:5px;background:#e3e9f7"></i><i style="left:53px;top:959px;width:5px;height:5px;background:#989ca2"></i><i style="left:58px;top:949px;width:5px;height:5px;background:#e0e0e0"></i><i style="left:58px;top:954px;width:5px;height:5px;background:#9d9d9d"></i><i style="left:58px;top:959px;width:5px;height:5px;background:#e5e9ef"></i><i style="left:63px;top:949px;width:5px;height:5px;background:#e5e9e3"></i><i style="left:63px;top:954px;width:5px;height:5px;background:#b5bbc9"></i><i style="left:63px;top:959px;width:5px;height:5px;background:#eee6da"></i><i style="left:68px;top:949px;width:5px;height:5px;background:#fffbf9"></i><i style="left:68px;top:954px;width:5px;height:5px;background:#959ba9"></i><i style="left:68px;top:959px;width:5px;height:5px;background:#cfc3c1"></i><i style="left:73px;top:949px;width:5px;height:5px;background:#fcfffa"></i><i style="left:73px;top:954px;width:5px;height:5px;background:#f8f0e4"></i><i style="left:73px;top:959px;width:5px;height:5px;background:#aeaea2"></i><i style="left:78px;top:949px;width:5px;height:5px;background:#dde3f1"></i><i style="left:78px;top:954px;width:5px;height:5px;background:#f4ece0"></i><i style="left:78px;top:959px;width:5px;height:5px;background:#ecece0"></i><i style="left:83px;top:949px;width:5px;height:5px;background:#fafef8"></i><i style="left:83px;top:954px;width:5px;height:5px;background:#cdcdc1"></i><i style="left:83px;top:959px;width:5px;height:5px;background:#c7cddb"></i><i style="left:88px;top:949px;width:5px;height:5px;background:#ebf1ff"></i><i style="left:88px;top:954px;width:5px;height:5px;background:#b9b9b9"></i><i style="left:88px;top:959px;width:5px;height:5px;background:#e1e5eb"></i><i style="left:93px;top:949px;width:5px;height:5px;background:#f9f9ed"></i><i style="left:93px;top:954px;width:5px;height:5px;background:#dfe3e9"></i><i style="left:93px;top:959px;width:5px;height:5px;background:#9d9d91"></i><i style="left:98px;top:949px;width:5px;height:5px;background:#f1e5e3"></i><i style="left:98px;top:954px;width:5px;height:5px;background:#c7bbb9"></i><i style="left:98px;top:959px;width:5px;height:5px;background:#d8d0c4"></i><i style="left:103px;top:949px;width:5px;height:5px;background:#f8fcf6"></i><i style="left:103px;top:954px;width:5px;height:5px;background:#eff3ed"></i><i style="left:103px;top:959px;width:5px;height:5px;background:#e9e9dd"></i><i style="left:108px;top:949px;width:5px;height:5px;background:#f2f2e6"></i><i style="left:108px;top:954px;width:5px;height:5px;background:#c7cddb"></i><i style="left:108px;top:959px;width:5px;height:5px;background:#eeeeee"></i><i style="left:113px;top:949px;width:5px;height:5px;background:#eaf0fe"></i><i style="left:113px;top:954px;width:5px;height:5px;background:#babeb8"></i><i style="left:113px;top:959px;width:5px;height:5px;background:#b4a8a6"></i><i style="left:118px;top:949px;width:5px;height:5px;background:#d8deec"></i><i style="left:118px;top:954px;width:5px;height:5px;background:#aeaea2"></i><i style="left:118px;top:959px;width:5px;height:5px;background:#ebe3d7"></i><i style="left:23px;top:964px;width:101px;height:5px;background:#f4f4f4"></i><i style="left:20px;top:964px;width:3px;height:5px;background:#666666"></i><i style="left:23px;top:969px;width:5px;height:5px;background:#c9c9c4"></i><i style="left:23px;top:974px;width:5px;height:5px;background:#ccccc0"></i><i style="left:23px;top:979px;width:5px;height:5px;background:#ddddd1"></i><i style="left:28px;top:969px;width:5px;height:5px;background:#f5fbff"></i><i style="left:28px;top:974px;width:5px;height:5px;background:#dadada"></i><i style="left:28px;top:979px;width:5px;height:5px;background:#e5d9d7"></i><i style="left:33px;top:969px;width:5px;height:5px;background:#fffff7"></i><i style="left:33px;top:974px;width:5px;height:5px;background:#d2cabe"></i><i style="left:33px;top:979px;width:5px;height:5px;background:#abb1bf"></i><i style="left:38px;top:969px;width:5px;height:5px;background:#dde1e7"></i><i style="left:38px;top:974px;width:5px;height:5px;background:#cacec8"></i><i style="left:38px;top:979px;width:5px;height:5px;background:#fcf4e8"></i><i style="left:43px;top:969px;width:5px;height:5px;background:#f8ecea"></i><i style="left:43px;top:974px;width:5px;height:5px;background:#9d9d91"></i><i style="left:43px;top:979px;width:5px;height:5px;background:#c9cdc7"></i><i style="left:48px;top:969px;width:5px;height:5px;background:#ede1df"></i><i style="left:48px;top:974px;width:5px;height:5px;background:#c9c9bd"></i><i style="left:48px;top:979px;width:5px;height:5px;background:#aaa296"></i><i style="left:53px;top:969px;width:5px;height:5px;background:#fff5f3"></i><i style="left:53px;top:974px;width:5px;height:5px;background:#d0d6e4"></i><i style="left:53px;top:979px;width:5px;height:5px;background:#d0d6e4"></i><i style="left:58px;top:969px;width:5px;height:5px;background:#fffaf8"></i><i style="left:58px;top:974px;width:5px;height:5px;background:#ede5d9"></i><i style="left:58px;top:979px;width:5px;height:5px;background:#bab2a6"></i><i style="left:63px;top:969px;width:5px;height:5px;background:#eaeaea"></i><i style="left:63px;top:974px;width:5px;height:5px;background:#b3b3a7"></i><i style="left:63px;top:979px;width:5px;height:5px;background:#e7edfb"></i><i style="left:68px;top:969px;width:5px;height:5px;background:#fff3f1"></i><i style="left:68px;top:974px;width:5px;height:5px;background:#d6dcea"></i><i style="left:68px;top:979px;width:5px;height:5px;background:#cfcfc3"></i><i style="left:73px;top:969px;width:5px;height:5px;background:#fffff9"></i><i style="left:73px;top:974px;width:5px;height:5px;background:#b5ada1"></i><i style="left:73px;top:979px;width:5px;height:5px;background:#9da19b"></i><i style="left:78px;top:969px;width:5px;height:5px;background:#fbfbef"></i><i style="left:78px;top:974px;width:5px;height:5px;background:#9ba1af"></i><i style="left:78px;top:979px;width:5px;height:5px;background:#e8ece6"></i><i style="left:83px;top:969px;width:5px;height:5px;background:#efe7db"></i><i style="left:83px;top:974px;width:5px;height:5px;background:#c8bcba"></i><i style="left:83px;top:979px;width:5px;height:5px;background:#9197a5"></i><i style="left:88px;top:969px;width:5px;height:5px;background:#f9edeb"></i><i style="left:88px;top:974px;width:5px;height:5px;background:#e3e3e3"></i><i style="left:88px;top:979px;width:5px;height:5px;background:#a2a2a2"></i><i style="left:93px;top:969px;width:5px;height:5px;background:#f1f1e5"></i><i style="left:93px;top:974px;width:5px;height:5px;background:#e0e4de"></i><i style="left:93px;top:979px;width:5px;height:5px;background:#ebdfdd"></i><i style="left:98px;top:969px;width:5px;height:5px;background:#e3e9f7"></i><i style="left:98px;top:974px;width:5px;height:5px;background:#bbbfb9"></i><i style="left:98px;top:979px;width:5px;height:5px;background:#a4a8a2"></i><i style="left:103px;top:969px;width:5px;height:5px;background:#dee4f2"></i><i style="left:103px;top:974px;width:5px;height:5px;background:#9298a6"></i><i style="left:103px;top:979px;width:5px;height:5px;background:#bbb3a7"></i><i style="left:108px;top:969px;width:5px;height:5px;background:#f6f6f6"></i><i style="left:108px;top:974px;width:5px;height:5px;background:#999999"></i><i style="left:108px;top:979px;width:5px;height:5px;background:#a49896"></i><i style="left:113px;top:969px;width:5px;height:5px;background:#fbfbef"></i><i style="left:113px;top:974px;width:5px;height:5px;background:#f2f6f0"></i><i style="left:113px;top:979px;width:5px;height:5px;background:#dadace"></i><i style="left:118px;top:969px;width:5px;height:5px;background:#e8e8dc"></i><i style="left:118px;top:974px;width:5px;height:5px;background:#dee2e8"></i><i style="left:118px;top:979px;width:5px;height:5px;background:#c8c8c8"></i><i style="left:23px;top:984px;width:101px;height:5px;background:#f4f4f4"></i><i style="left:20px;top:984px;width:3px;height:5px;background:#666666"></i></div>
 <div class="abs" style="left:225px;top:978px;width:1317px;height:2px;background:#3a3a3a"></div>
 <div class="abs" style="left:0;top:0;width:1542px;height:1px;background:#474747"></div>
 <div class="abs" style="left:1522px;top:940px;width:18px;height:38px;background:linear-gradient(to right, rgba(0,0,0,0), rgba(0,0,0,.04))"></div>
 <div class="abs" style="left:1540px;top:934px;width:1px;height:44px;background:#9a9a9a;border-radius:1px 1px 0 0"></div>
 <div class="abs" style="left:1541px;top:934px;width:1px;height:44px;background:#ffffff"></div>
 <!-- selected cell S13 -->
 <div class="abs" style="left:1476px;top:507px;width:70px;height:23px;border:2px solid #1d6b3a"></div>
 <div class="abs" style="left:1537px;top:525px;width:6px;height:6px;background:#1d6b3a;border:1px solid #fff"></div>
 <!-- cursor -->
 <svg class="abs" style="left:1338px;top:508px" width="15" height="15" viewBox="0 0 14 14"><path d="M4.5 1 H9.5 V4.5 H13 V9.5 H9.5 V13 H4.5 V9.5 H1 V4.5 H4.5 Z" fill="#fff" stroke="#000" stroke-width="1.6"/></svg>
</div>
</body></html>
